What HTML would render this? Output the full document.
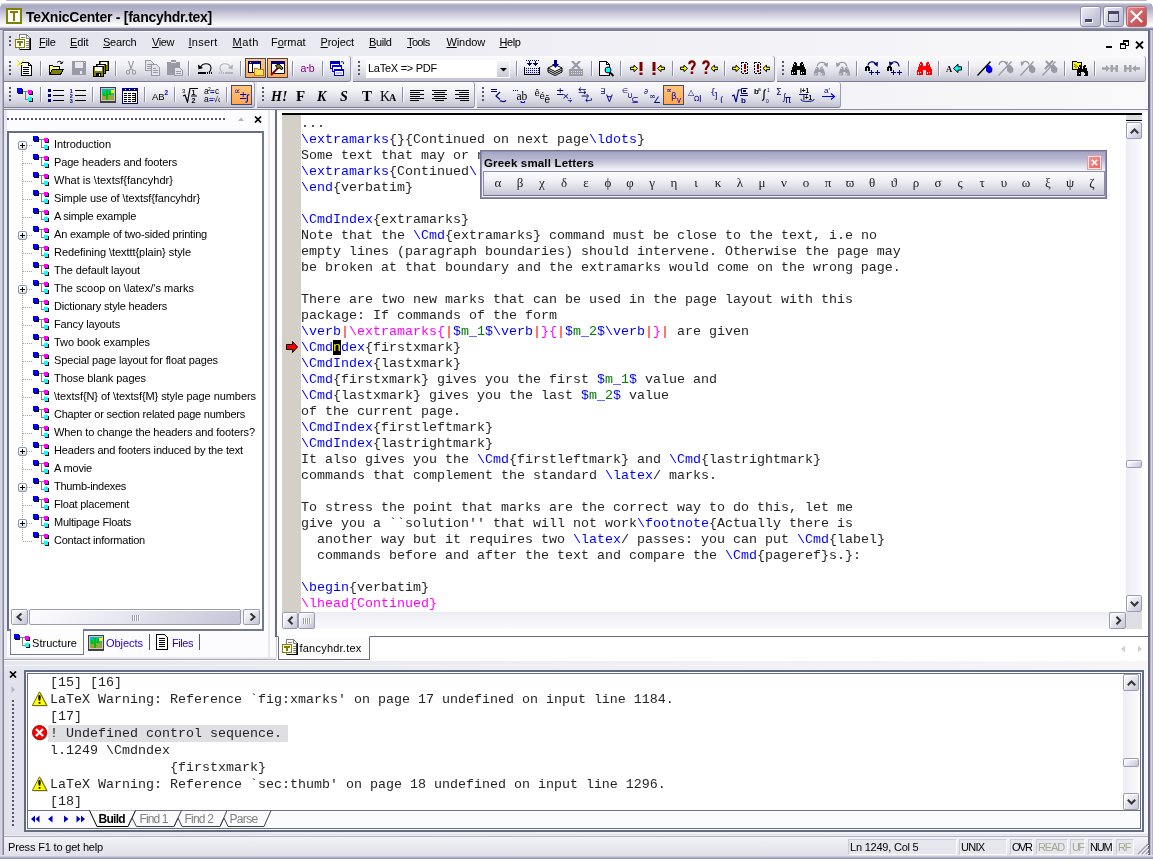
<!DOCTYPE html><html><head><meta charset="utf-8"><title>TeXnicCenter - [fancyhdr.tex]</title><style>
html,body{margin:0;padding:0;}
body{width:1153px;height:859px;overflow:hidden;position:relative;background:#d4d4e0;font-family:"Liberation Sans",sans-serif;font-size:11px;color:#000;}
div,span.a,svg.a{position:absolute;box-sizing:border-box;}
.ft{white-space:pre;display:inline-block;}
.ui{font-family:"Liberation Sans",sans-serif;font-size:11px;line-height:13px;white-space:pre;}
.mono{font-family:"Liberation Mono",monospace;font-size:13.333px;line-height:16px;white-space:pre;letter-spacing:0;color:#242424;}
.b{color:#0000ff}.m{color:#ff00ff}.r{color:#ff0000}.g{color:#008000}
.tb{background:linear-gradient(#fcfcfe 0%,#f1f1f6 35%,#dadae4 72%,#c2c2d0 100%);border-bottom:1px solid #7c7c92;border-right:1px solid #9c9cb0;border-radius:0 3px 3px 0;}
.sep{width:1px;background:#8e8ea8;box-shadow:1px 0 0 #fff;}
.grip{width:2px;background:repeating-linear-gradient(#55556a 0,#55556a 2px,transparent 2px,transparent 4px);}
.on{background:linear-gradient(#ffc67c,#ffa850);border:1px solid #4a4a5c;}
.sbtn{background:linear-gradient(135deg,#fdfdff 0%,#e6e6f0 45%,#c4c4d6 100%);border:1px solid #9a9ab4;border-radius:2px;box-shadow:inset 1px 1px 0 #fff;}
.trk{background:linear-gradient(90deg,#ececf3,#fbfbfd);}
.trkh{background:linear-gradient(#ececf3,#fbfbfd);}
u{text-decoration:underline;}
</style></head><body><div id="w" style="left:0;top:0;width:1153px;height:859px;will-change:transform;">
<div style="left:0px;top:0px;width:1153px;height:859px;background:#c9c9d8;"></div>
<div style="left:0px;top:0px;width:1153px;height:31px;border-radius:7px 7px 0 0;background:linear-gradient(#b4b4c8 0px,#b4b4c8 0.8px,#ffffff 1.2px,#ffffff 2.5px,#bcbcd0 4px,#a9a9c3 6px,#b0b0c8 9px,#cfcfdf 15px,#e6e6ee 20px,#f6f6fa 24px,#ffffff 26px,#d4d4e0 27.5px,#8f8fa8 28.5px,#7c7c96 30px);"></div>
<div style="left:0px;top:0px;width:8px;height:8px;background:radial-gradient(circle at 8px 8px,transparent 7.5px,#fff 8px);"></div>
<div style="left:1145px;top:0px;width:8px;height:8px;background:radial-gradient(circle at 0px 8px,transparent 7.5px,#fff 8px);"></div>
<div style="left:0px;top:30px;width:4px;height:829px;background:linear-gradient(90deg,#b9b9c9 0,#ededf3 1px,#c3c3d3 2px,#9a9ab2 3px,#6e6e8a 4px);"></div>
<div style="left:1148px;top:30px;width:5px;height:829px;background:linear-gradient(90deg,#62627c 0,#6e6e8a 1.5px,#b5b5c8 2.5px,#d5d5e0 3.5px,#a4a4b8 5px);"></div>
<div style="left:0px;top:855px;width:1153px;height:4px;background:linear-gradient(#e9e9f0 0,#c9c9d8 1.5px,#a7a7bd 3px,#7c7c96 4px);"></div>
<div style="left:6px;top:8px;width:16px;height:16px;background:#fff;border:2px solid #808000;"></div>
<div style="left:10px;top:11px;width:8px;height:2px;background:#808000;"></div>
<div style="left:13px;top:11px;width:2px;height:10px;background:#808000;"></div>
<div class="ui" style="left:26px;top:8.5px;font-size:14px;line-height:16px;font-weight:bold;"><span class="ft" style="letter-spacing:-0.257px;">TeXnicCenter - [fancyhdr.tex]</span></div>
<div style="left:1080px;top:6px;width:21px;height:21px;border-radius:3px;border:1px solid #8d8dab;box-shadow:inset 1px 1px 0 #fff;background:linear-gradient(135deg,#f0f0f6,#c9c9dc 60%,#b7b7cf);"><div style="left:4px;top:12px;width:7px;height:3px;background:#474769;box-shadow:1px 1px 0 #fff;"></div></div>
<div style="left:1103px;top:6px;width:21px;height:21px;border-radius:3px;border:1px solid #8d8dab;box-shadow:inset 1px 1px 0 #fff;background:linear-gradient(135deg,#f0f0f6,#c9c9dc 60%,#b7b7cf);"><div style="left:4px;top:4px;width:11px;height:11px;border:1px solid #474769;border-top-width:3px;"></div></div>
<div style="left:1126px;top:6px;width:21px;height:21px;border-radius:3px;border:1px solid #b26a72;box-shadow:inset 1px 1px 0 #f0b0b0;background:linear-gradient(135deg,#e68a8a,#cf5f63 55%,#c0494f);"><svg class="a" style="left:3px;top:3px" width="13" height="13" viewBox="0 0 13 13"><path d="M1.5 1.5L11.5 11.5M11.5 1.5L1.5 11.5" stroke="#fff" stroke-width="2.2" stroke-linecap="round"/></svg></div>
<div style="left:4px;top:31px;width:1144px;height:25px;background:linear-gradient(90deg,#e3e3ed 0,#eeeef4 45%,#f9f9fb 100%);"></div>
<div style="left:4px;top:31px;width:1144px;height:1px;background:#fafafc;"></div>
<div class="grip" style="left:9px;top:36px;width:2px;height:10px;"></div>
<svg class="a" style="left:15px;top:34px" width="16" height="16" viewBox="0 0 16 16" shape-rendering="crispEdges"><path d="M4.5 0.5H11.5L15.5 4.5V15.5H4.5Z" fill="#fff" stroke="#808080" stroke-width="1"/><path d="M11.5 0.5V4.5H15.5" fill="none" stroke="#808080" stroke-width="1"/><rect x="15" y="4" width="1" height="12" fill="#000"/><rect x="5" y="15" width="11" height="1" fill="#000"/><rect x="14" y="5" width="1" height="10" fill="#404040"/><rect x="6" y="3" width="4" height="1" fill="#808080"/><rect x="11" y="7" width="3" height="1" fill="#808080"/><rect x="11" y="9" width="3" height="1" fill="#808080"/><rect x="11" y="11" width="3" height="1" fill="#808080"/><rect x="11" y="13" width="3" height="1" fill="#808080"/><rect x="0" y="5" width="10" height="9" fill="#808000"/><rect x="1" y="6" width="8" height="7" fill="#fff"/><rect x="2" y="7" width="6" height="2" fill="#808000"/><rect x="4" y="7" width="2" height="5" fill="#808000"/></svg>
<div class="ui" style="left:39px;top:36px;"><span class="ft" style="letter-spacing:-0.312px;"><u>F</u>ile</span></div>
<div class="ui" style="left:70px;top:36px;"><span class="ft" style="letter-spacing:-0.117px;"><u>E</u>dit</span></div>
<div class="ui" style="left:103px;top:36px;"><span class="ft" style="letter-spacing:-0.229px;"><u>S</u>earch</span></div>
<div class="ui" style="left:152px;top:36px;"><span class="ft" style="letter-spacing:-0.414px;"><u>V</u>iew</span></div>
<div class="ui" style="left:188.5px;top:36px;"><span class="ft" style="letter-spacing:0.245px;"><u>I</u>nsert</span></div>
<div class="ui" style="left:232.5px;top:36px;"><span class="ft" style="letter-spacing:0.508px;"><u>M</u>ath</span></div>
<div class="ui" style="left:271px;top:36px;"><span class="ft" style="letter-spacing:-0.060px;">F<u>o</u>rmat</span></div>
<div class="ui" style="left:320.5px;top:36px;"><span class="ft" style="letter-spacing:-0.107px;"><u>P</u>roject</span></div>
<div class="ui" style="left:369px;top:36px;"><span class="ft" style="letter-spacing:-0.394px;"><u>B</u>uild</span></div>
<div class="ui" style="left:407px;top:36px;"><span class="ft" style="letter-spacing:-0.637px;"><u>T</u>ools</span></div>
<div class="ui" style="left:446.5px;top:36px;"><span class="ft" style="letter-spacing:-0.107px;"><u>W</u>indow</span></div>
<div class="ui" style="left:499.5px;top:36px;"><span class="ft" style="letter-spacing:-0.410px;"><u>H</u>elp</span></div>
<div style="left:1106px;top:46px;width:6px;height:2px;background:#000;"></div>
<div style="left:1123px;top:40px;width:6px;height:6px;border:1px solid #000;border-top-width:2px;"></div>
<div style="left:1120px;top:43px;width:6px;height:6px;border:1px solid #000;border-top-width:2px;background:#f3f3f7;"></div>
<svg class="a" style="left:1135px;top:41px" width="9" height="8" viewBox="0 0 9 8"><path d="M1 0.5L8 7.5M8 0.5L1 7.5" stroke="#000" stroke-width="1.8"/></svg>
<div style="left:4px;top:56px;width:1144px;height:54px;background:linear-gradient(90deg,#e3e3ed 0,#eeeef4 45%,#f9f9fb 100%);"></div>
<div style="left:4px;top:109px;width:1144px;height:1px;background:#8a8aa2;"></div>
<div class="tb" style="left:4px;top:56px;width:347px;height:26px;"></div>
<div class="grip" style="left:9px;top:61px;width:2px;height:14px;"></div>
<div class="tb" style="left:353px;top:56px;width:422px;height:26px;"></div>
<div class="grip" style="left:358px;top:61px;width:2px;height:14px;"></div>
<div class="tb" style="left:777px;top:56px;width:369px;height:26px;"></div>
<div class="grip" style="left:782px;top:61px;width:2px;height:14px;"></div>
<div class="tb" style="left:4px;top:82px;width:251px;height:26px;"></div>
<div class="grip" style="left:9px;top:87px;width:2px;height:14px;"></div>
<div class="tb" style="left:257px;top:82px;width:218px;height:26px;"></div>
<div class="grip" style="left:262px;top:87px;width:2px;height:14px;"></div>
<div class="tb" style="left:477px;top:82px;width:364px;height:26px;"></div>
<div class="grip" style="left:482px;top:87px;width:2px;height:14px;"></div>
<div class="sep" style="left:40px;top:61px;width:1px;height:15px;"></div>
<div class="sep" style="left:115px;top:61px;width:1px;height:15px;"></div>
<div class="sep" style="left:188px;top:61px;width:1px;height:15px;"></div>
<div class="sep" style="left:240px;top:61px;width:1px;height:15px;"></div>
<div class="sep" style="left:292px;top:61px;width:1px;height:15px;"></div>
<div class="sep" style="left:322px;top:61px;width:1px;height:15px;"></div>
<div class="sep" style="left:516px;top:61px;width:1px;height:15px;"></div>
<div class="sep" style="left:591px;top:61px;width:1px;height:15px;"></div>
<div class="sep" style="left:620px;top:61px;width:1px;height:15px;"></div>
<div class="sep" style="left:672px;top:61px;width:1px;height:15px;"></div>
<div class="sep" style="left:724px;top:61px;width:1px;height:15px;"></div>
<div class="sep" style="left:856px;top:61px;width:1px;height:15px;"></div>
<div class="sep" style="left:908px;top:61px;width:1px;height:15px;"></div>
<div class="sep" style="left:938px;top:61px;width:1px;height:15px;"></div>
<div class="sep" style="left:968px;top:61px;width:1px;height:15px;"></div>
<div class="sep" style="left:1064px;top:61px;width:1px;height:15px;"></div>
<div class="sep" style="left:1094px;top:61px;width:1px;height:15px;"></div>
<div class="sep" style="left:40px;top:87px;width:1px;height:15px;"></div>
<div class="sep" style="left:92px;top:87px;width:1px;height:15px;"></div>
<div class="sep" style="left:144px;top:87px;width:1px;height:15px;"></div>
<div class="sep" style="left:174px;top:87px;width:1px;height:15px;"></div>
<div class="sep" style="left:226px;top:87px;width:1px;height:15px;"></div>
<div class="sep" style="left:402px;top:87px;width:1px;height:15px;"></div>
<div class="on" style="left:245px;top:58px;width:21px;height:20px;"></div>
<div class="on" style="left:267px;top:58px;width:21px;height:20px;"></div>
<div class="on" style="left:231px;top:85px;width:21px;height:20px;"></div>
<div class="on" style="left:663px;top:85px;width:21px;height:20px;"></div>
<svg class="a" style="left:17px;top:60px" width="16" height="16" viewBox="0 0 16 16" shape-rendering="crispEdges"><path d="M4.5 2.5H11.5L14.5 5.5V15.5H4.5Z" fill="#fff" stroke="#000" stroke-width="1"/><path d="M11.5 2.5V5.5H14.5" fill="none" stroke="#000" stroke-width="1"/><rect x="6" y="7" width="6" height="1" fill="#000"/><rect x="6" y="9" width="6" height="1" fill="#000"/><rect x="6" y="11" width="6" height="1" fill="#000"/><rect x="6" y="13" width="6" height="1" fill="#000"/><path d="M0.5 0.5L6 6M6.5 0.5L3 4M0.5 5.5L4 3" fill="none" stroke="#e8e800" stroke-width="1.2"/></svg>
<svg class="a" style="left:48px;top:60px" width="16" height="16" viewBox="0 0 16 16" shape-rendering="crispEdges"><path d="M1.5 14.5V5.5H4.5L5.5 6.5H11.5V9.5" fill="#ffff80" stroke="#000" stroke-width="1"/><path d="M1.5 14.5L4.5 9.5H15.5L12.5 14.5Z" fill="#808000" stroke="#000" stroke-width="1"/><path d="M9 2.5C11 0.5 13.5 1 14 3.5M14 3.5L12 3M14 3.5L15 1.5" fill="none" stroke="#000" stroke-width="1" shape-rendering="auto"/></svg>
<svg class="a" style="left:71px;top:60px" width="16" height="16" viewBox="0 0 16 16" shape-rendering="crispEdges"><rect x="1" y="1" width="14" height="14" fill="#9a9aa6"/><rect x="4" y="2" width="8" height="6" fill="#e9e9f0"/><rect x="4" y="10" width="8" height="5" fill="#9a9aa6"/><rect x="9" y="11" width="2" height="3" fill="#e9e9f0"/><rect x="13" y="2" width="1" height="1" fill="#e9e9f0"/></svg>
<svg class="a" style="left:93px;top:61px" width="16" height="16" viewBox="0 0 16 16" shape-rendering="crispEdges"><rect x="6" y="0" width="10" height="10" fill="#808000"/><path d="M6.5 0.5H15.5V9.5H6.5Z" fill="none" stroke="#000" stroke-width="1"/><rect x="8" y="1" width="6" height="3" fill="#fff"/><rect x="3" y="3" width="10" height="10" fill="#808000"/><path d="M3.5 3.5H12.5V12.5H3.5Z" fill="none" stroke="#000" stroke-width="1"/><rect x="5" y="4" width="6" height="3" fill="#fff"/><rect x="0" y="5" width="11" height="11" fill="#808000"/><path d="M0.5 5.5H10.5V15.5H0.5Z" fill="none" stroke="#000" stroke-width="1"/><rect x="2" y="6" width="7" height="4" fill="#fff"/><rect x="3" y="12" width="5" height="3" fill="#000"/><rect x="6" y="13" width="1" height="2" fill="#fff"/></svg>
<svg class="a" style="left:123px;top:60px" width="16" height="16" viewBox="0 0 16 16"><path d="M5.5 1L8 8.5L6 10.5M10.5 1L8 8.5L10 10.5" fill="none" stroke="#9a9aa6" stroke-width="1.1" shape-rendering="auto"/><ellipse cx="5" cy="12.3" rx="1.6" ry="2" fill="none" stroke="#9a9aa6" stroke-width="1.1"/><ellipse cx="11" cy="12.3" rx="1.6" ry="2" fill="none" stroke="#9a9aa6" stroke-width="1.1"/></svg>
<svg class="a" style="left:145px;top:60px" width="16" height="16" viewBox="0 0 16 16" shape-rendering="crispEdges"><path d="M0.5 0.5H5.5L8.5 3.5V10.5H0.5Z" fill="#e4e4ec" stroke="#9a9aa6" stroke-width="1"/><rect x="2" y="4" width="4" height="1" fill="#9a9aa6"/><rect x="2" y="6" width="4" height="1" fill="#9a9aa6"/><rect x="2" y="8" width="4" height="1" fill="#9a9aa6"/><path d="M6.5 4.5H11.5L14.5 7.5V15.5H6.5Z" fill="#e4e4ec" stroke="#9a9aa6" stroke-width="1"/><rect x="8" y="8" width="3" height="1" fill="#9a9aa6"/><rect x="8" y="10" width="5" height="1" fill="#9a9aa6"/><rect x="8" y="12" width="5" height="1" fill="#9a9aa6"/></svg>
<svg class="a" style="left:167px;top:60px" width="16" height="16" viewBox="0 0 16 16" shape-rendering="crispEdges"><rect x="0" y="2" width="13" height="13" fill="#9a9aa6"/><rect x="4" y="0" width="5" height="3" fill="#9a9aa6"/><rect x="4" y="2" width="5" height="1" fill="#e4e4ec"/><path d="M7.5 7.5H12.5L15.5 10.5V15.5H7.5Z" fill="#e4e4ec" stroke="#9a9aa6" stroke-width="1"/><rect x="9" y="11" width="5" height="1" fill="#9a9aa6"/><rect x="9" y="13" width="5" height="1" fill="#9a9aa6"/></svg>
<svg class="a" style="left:197px;top:60px" width="16" height="16" viewBox="0 0 16 16"><path d="M3.5 7.5C5.5 2.5 13 2.5 14 7.5C14.3 10 13 11.5 12 12.5" fill="none" stroke="#000" stroke-width="1.1" shape-rendering="auto"/><path d="M1 4.5L1.5 9.5L6 8Z" fill="#000" shape-rendering="auto"/><rect x="1" y="12" width="8" height="2" fill="#000"/><rect x="10" y="12" width="1" height="2" fill="#000"/><rect x="12" y="12" width="1" height="2" fill="#000"/><rect x="14" y="12" width="1" height="2" fill="#000"/></svg>
<svg class="a" style="left:218px;top:60px" width="16" height="16" viewBox="0 0 16 16"><path d="M12.5 7.5C10.5 2.5 3 2.5 2 7.5C1.7 10 3 11.5 4 12.5" fill="none" stroke="#b0b0ba" stroke-width="1.1"/><path d="M15 4.5L14.5 9.5L10 8Z" fill="#b0b0ba"/><rect x="7" y="12" width="8" height="2" fill="#b4b4c0"/><rect x="5" y="12" width="1" height="2" fill="#b4b4c0"/><rect x="3" y="12" width="1" height="2" fill="#b4b4c0"/><rect x="1" y="12" width="1" height="2" fill="#b4b4c0"/></svg>
<svg class="a" style="left:248px;top:60px" width="16" height="16" viewBox="0 0 16 16" shape-rendering="crispEdges"><rect x="0" y="1" width="13" height="12" fill="#fff"/><path d="M0.5 1.5H12.5V12.5H0.5Z" fill="none" stroke="#000" stroke-width="1"/><rect x="0" y="1" width="13" height="3" fill="#000080"/><rect x="2" y="2" width="1" height="1" fill="#fff"/><rect x="4" y="4" width="1" height="9" fill="#000"/><path d="M6.5 15.5V8.5H9.5L10.5 9.5H15.5V15.5Z" fill="#ffe060" stroke="#c08000" stroke-width="1"/></svg>
<svg class="a" style="left:270px;top:60px" width="16" height="16" viewBox="0 0 16 16"><rect x="1" y="1" width="14" height="13" fill="#fff"/><path d="M1.5 1.5H14.5V13.5H1.5Z" fill="none" stroke="#000" stroke-width="1"/><rect x="1" y="1" width="14" height="3" fill="#000080"/><path d="M1 15L8 8" fill="none" stroke="#800000" stroke-width="2" shape-rendering="auto"/><path d="M5.5 5.5L9 4L13 8L11.5 10L10 8L7.5 8.5Z" fill="#808000" stroke="#000" stroke-width="1" shape-rendering="auto"/></svg>
<svg class="a" style="left:300px;top:60px" width="16" height="16" viewBox="0 0 16 16"><text x="0.5" y="11.5" font-family="Liberation Sans,sans-serif" font-size="10.5" fill="#800080" font-weight="normal" font-style="normal" text-anchor="start">a</text><rect x="6.8" y="7" width="1.5" height="1.5" fill="#800080"/><text x="8.8" y="11.5" font-family="Liberation Sans,sans-serif" font-size="10.5" fill="#800080" font-weight="normal" font-style="normal" text-anchor="start">b</text></svg>
<svg class="a" style="left:329px;top:60px" width="16" height="16" viewBox="0 0 16 16" shape-rendering="crispEdges"><rect x="1" y="1" width="10" height="8" fill="#fff"/><path d="M1.5 1.5H10.5V8.5H1.5Z" fill="none" stroke="#0000c0" stroke-width="1"/><rect x="1" y="1" width="10" height="3" fill="#0000c0"/><rect x="3" y="5" width="10" height="7" fill="#fff"/><path d="M3.5 5.5H12.5V11.5H3.5Z" fill="none" stroke="#0000ff" stroke-width="1"/><rect x="3" y="5" width="10" height="2" fill="#0000ff"/><rect x="5" y="9" width="10" height="7" fill="#fff"/><path d="M5.5 9.5H14.5V15.5H5.5Z" fill="none" stroke="#0000c0" stroke-width="1"/><rect x="5" y="9" width="10" height="2" fill="#0000c0"/><rect x="7" y="12" width="6" height="2" fill="#c0c0e0"/><path d="M12 2C14 1 15 2 14.5 4" fill="none" stroke="#0000c0" stroke-width="1" shape-rendering="auto"/></svg>
<svg class="a" style="left:524px;top:60px" width="16" height="16" viewBox="0 0 16 16" shape-rendering="crispEdges"><path d="M0.5 6.5V14.5H15.5V6.5" fill="none" stroke="#000" stroke-width="1"/><rect x="0" y="14" width="16" height="1" fill="#000"/><rect x="2" y="8" width="1" height="1" fill="#000080"/><rect x="4" y="8" width="1" height="1" fill="#000080"/><rect x="6" y="8" width="1" height="1" fill="#000080"/><rect x="8" y="8" width="1" height="1" fill="#000080"/><rect x="10" y="8" width="1" height="1" fill="#000080"/><rect x="12" y="8" width="1" height="1" fill="#000080"/><rect x="14" y="8" width="1" height="1" fill="#000080"/><rect x="2" y="10" width="1" height="1" fill="#000080"/><rect x="4" y="10" width="1" height="1" fill="#000080"/><rect x="6" y="10" width="1" height="1" fill="#000080"/><rect x="8" y="10" width="1" height="1" fill="#000080"/><rect x="10" y="10" width="1" height="1" fill="#000080"/><rect x="12" y="10" width="1" height="1" fill="#000080"/><rect x="14" y="10" width="1" height="1" fill="#000080"/><rect x="2" y="12" width="1" height="1" fill="#000080"/><rect x="4" y="12" width="1" height="1" fill="#000080"/><rect x="6" y="12" width="1" height="1" fill="#000080"/><rect x="8" y="12" width="1" height="1" fill="#000080"/><rect x="10" y="12" width="1" height="1" fill="#000080"/><rect x="12" y="12" width="1" height="1" fill="#000080"/><rect x="14" y="12" width="1" height="1" fill="#000080"/><rect x="2" y="0" width="1" height="1" fill="#000080"/><rect x="4" y="0" width="1" height="1" fill="#000080"/><rect x="6" y="0" width="1" height="1" fill="#000080"/><rect x="8" y="0" width="1" height="1" fill="#000080"/><rect x="10" y="0" width="1" height="1" fill="#000080"/><rect x="12" y="0" width="1" height="1" fill="#000080"/><rect x="14" y="0" width="1" height="1" fill="#000080"/><path d="M3 3H8L5.5 6Z M9 3H14L11.5 6Z" fill="#000080"/><rect x="5" y="1" width="1" height="3" fill="#000080"/><rect x="11" y="1" width="1" height="3" fill="#000080"/></svg>
<svg class="a" style="left:547px;top:60px" width="16" height="16" viewBox="0 0 16 16"><path d="M1 8L8 4.5L15 8L8 11.5Z" fill="#fff" stroke="#000" stroke-width="1" shape-rendering="auto"/><path d="M1 8V10L8 13.5L15 10V8M1 10V12L8 15.5L15 12V10" fill="none" stroke="#000" stroke-width="1" shape-rendering="auto"/><rect x="7" y="0" width="3" height="4" fill="#000080"/><path d="M5 4H12L8.5 8Z" fill="#000080" shape-rendering="auto"/></svg>
<svg class="a" style="left:568px;top:61px" width="16" height="16" viewBox="0 0 16 16"><rect x="1" y="8" width="14" height="7" fill="#9a9aa6"/><rect x="3" y="10" width="1" height="1" fill="#e4e4ec"/><rect x="5" y="10" width="1" height="1" fill="#e4e4ec"/><rect x="7" y="10" width="1" height="1" fill="#e4e4ec"/><rect x="9" y="10" width="1" height="1" fill="#e4e4ec"/><rect x="11" y="10" width="1" height="1" fill="#e4e4ec"/><rect x="13" y="10" width="1" height="1" fill="#e4e4ec"/><rect x="3" y="12" width="1" height="1" fill="#e4e4ec"/><rect x="5" y="12" width="1" height="1" fill="#e4e4ec"/><rect x="7" y="12" width="1" height="1" fill="#e4e4ec"/><rect x="9" y="12" width="1" height="1" fill="#e4e4ec"/><rect x="11" y="12" width="1" height="1" fill="#e4e4ec"/><rect x="13" y="12" width="1" height="1" fill="#e4e4ec"/><path d="M4 0L12 8M12 0L4 8" fill="none" stroke="#9a9aa6" stroke-width="2.2" shape-rendering="auto"/></svg>
<svg class="a" style="left:599px;top:61px" width="16" height="16" viewBox="0 0 16 16" shape-rendering="crispEdges"><path d="M0.5 0.5H7.5L10.5 3.5V14.5H0.5Z" fill="#fff" stroke="#000" stroke-width="1"/><path d="M7.5 0.5V3.5H10.5" fill="none" stroke="#000" stroke-width="1"/><circle cx="9" cy="9" r="3" fill="#00ffff" stroke="#000" stroke-width="1" shape-rendering="auto"/><path d="M11 11.5L14.5 15" fill="none" stroke="#000" stroke-width="2" shape-rendering="auto"/></svg>
<svg class="a" style="left:629px;top:60px" width="16" height="16" viewBox="0 0 16 16"><path d="M1.5 7.2h3.5v-2l3.5 3.2l-3.5 3.2v-2h-3.5z" fill="#ffff00" stroke="#000" stroke-width="1" shape-rendering="auto"/><rect x="10.5" y="2" width="3" height="9" fill="#800000"/><rect x="10.5" y="12.5" width="3" height="2.5" fill="#800000"/></svg>
<svg class="a" style="left:651px;top:60px" width="16" height="16" viewBox="0 0 16 16"><rect x="1.5" y="2" width="3" height="9" fill="#800000"/><rect x="1.5" y="12.5" width="3" height="2.5" fill="#800000"/><path d="M13.5 7.2h-3.5v-2l-3.5 3.2l3.5 3.2v-2h3.5z" fill="#ffff00" stroke="#000" stroke-width="1" shape-rendering="auto"/></svg>
<svg class="a" style="left:680px;top:60px" width="16" height="16" viewBox="0 0 16 16"><path d="M0.5 7.2h3.5v-2l3.5 3.2l-3.5 3.2v-2h-3.5z" fill="#ffff00" stroke="#000" stroke-width="1" shape-rendering="auto"/><path d="M9.3 4.2C9.3 0.6 14.7 0.6 14.7 4C14.7 6.5 11.9 6.5 11.9 10" fill="none" stroke="#800000" stroke-width="2.3" shape-rendering="auto"/><rect x="10.7" y="11.5" width="2.5" height="2.5" fill="#800000"/></svg>
<svg class="a" style="left:702px;top:60px" width="16" height="16" viewBox="0 0 16 16"><path d="M1.3 4.2C1.3 0.6 6.7 0.6 6.7 4C6.7 6.5 3.9 6.5 3.9 10" fill="none" stroke="#800000" stroke-width="2.3" shape-rendering="auto"/><rect x="2.7" y="11.5" width="2.5" height="2.5" fill="#800000"/><path d="M16 7.2h-3.5v-2l-3.5 3.2l3.5 3.2v-2h3.5z" fill="#ffff00" stroke="#000" stroke-width="1" shape-rendering="auto"/></svg>
<svg class="a" style="left:732px;top:60px" width="16" height="16" viewBox="0 0 16 16"><path d="M0.5 7.2h3.5v-2l3.5 3.2l-3.5 3.2v-2h-3.5z" fill="#ffff00" stroke="#000" stroke-width="1" shape-rendering="auto"/><rect x="9.5" y="2.5" width="6" height="11" fill="none" stroke="#000" stroke-dasharray="2 1" stroke-width="1" shape-rendering="crispEdges"/><rect x="12" y="4" width="2" height="5" fill="#800000"/><rect x="12" y="10" width="2" height="2" fill="#800000"/></svg>
<svg class="a" style="left:754px;top:60px" width="16" height="16" viewBox="0 0 16 16"><rect x="0.5" y="2.5" width="6" height="11" fill="none" stroke="#000" stroke-dasharray="2 1" stroke-width="1" shape-rendering="crispEdges"/><rect x="3" y="4" width="2" height="5" fill="#800000"/><rect x="3" y="10" width="2" height="2" fill="#800000"/><path d="M16 7.2h-3.5v-2l-3.5 3.2l3.5 3.2v-2h3.5z" fill="#ffff00" stroke="#000" stroke-width="1" shape-rendering="auto"/></svg>
<svg class="a" style="left:791px;top:61px" width="16" height="16" viewBox="0 0 16 16" shape-rendering="crispEdges"><g transform="translate(-1 0) scale(1.07 1)"><path d="M4 1H6V2H7V5H9V2H10V1H12V2L13 4L15 10V14H9.5V9H6.5V14H1V10L3 4L4 2Z" fill="#000"/><rect x="2" y="11" width="1" height="2" fill="#fff"/><rect x="4" y="11" width="1" height="1" fill="#fff"/><rect x="10" y="11" width="1" height="2" fill="#fff"/><rect x="12" y="11" width="1" height="1" fill="#fff"/><rect x="4" y="3" width="1" height="1" fill="#fff"/><rect x="11" y="3" width="1" height="1" fill="#fff"/></g></svg>
<svg class="a" style="left:813px;top:61px" width="16" height="16" viewBox="0 0 16 16"><g transform="translate(0 5) scale(0.8 0.68)"><path d="M4 1H6V2H7V5H9V2H10V1H12V2L13 4L15 10V14H9.5V9H6.5V14H1V10L3 4L4 2Z" fill="#9a9aa6"/><rect x="2" y="11" width="1" height="2" fill="#fff"/><rect x="4" y="11" width="1" height="1" fill="#fff"/><rect x="10" y="11" width="1" height="2" fill="#fff"/><rect x="12" y="11" width="1" height="1" fill="#fff"/><rect x="4" y="3" width="1" height="1" fill="#fff"/><rect x="11" y="3" width="1" height="1" fill="#fff"/></g><path d="M4.5 5C5 0.5 11.5 0 13 4" fill="none" stroke="#9a9aa6" stroke-width="1.3" shape-rendering="auto"/><path d="M10.5 3.5L15 1.5L14.5 6.5Z" fill="#9a9aa6"/></svg>
<svg class="a" style="left:835px;top:61px" width="16" height="16" viewBox="0 0 16 16"><g transform="translate(3 5) scale(0.8 0.68)"><path d="M4 1H6V2H7V5H9V2H10V1H12V2L13 4L15 10V14H9.5V9H6.5V14H1V10L3 4L4 2Z" fill="#9a9aa6"/><rect x="2" y="11" width="1" height="2" fill="#fff"/><rect x="4" y="11" width="1" height="1" fill="#fff"/><rect x="10" y="11" width="1" height="2" fill="#fff"/><rect x="12" y="11" width="1" height="1" fill="#fff"/><rect x="4" y="3" width="1" height="1" fill="#fff"/><rect x="11" y="3" width="1" height="1" fill="#fff"/></g><path d="M11.5 5C11 0.5 4.5 0 3 4" fill="none" stroke="#9a9aa6" stroke-width="1.3" shape-rendering="auto"/><path d="M5.5 3.5L1 1.5L1.5 6.5Z" fill="#9a9aa6"/></svg>
<svg class="a" style="left:864px;top:60px" width="16" height="16" viewBox="0 0 16 16"><rect x="1" y="7" width="2" height="4" fill="#000"/><rect x="4" y="7" width="2" height="4" fill="#000"/><rect x="2" y="6" width="3" height="2" fill="#000"/><rect x="5" y="12" width="5" height="1" fill="#000080"/><rect x="7" y="10" width="1" height="5" fill="#000080"/><rect x="11" y="12" width="5" height="1" fill="#000080"/><rect x="13" y="10" width="1" height="5" fill="#000080"/><path d="M4 5.5C4.5 1 10.5 0.5 12 4.5" fill="none" stroke="#000080" stroke-width="1.2" shape-rendering="auto"/><path d="M9.5 3.5L14 2L13.5 7Z" fill="#000080" shape-rendering="auto"/></svg>
<svg class="a" style="left:886px;top:60px" width="16" height="16" viewBox="0 0 16 16"><rect x="1" y="7" width="2" height="4" fill="#000"/><rect x="4" y="7" width="2" height="4" fill="#000"/><rect x="2" y="6" width="3" height="2" fill="#000"/><rect x="5" y="12" width="5" height="1" fill="#000080"/><rect x="7" y="10" width="1" height="5" fill="#000080"/><rect x="11" y="12" width="5" height="1" fill="#000080"/><rect x="13" y="10" width="1" height="5" fill="#000080"/><path d="M13 6.5C12.5 1 6.5 0.5 5 4" fill="none" stroke="#000080" stroke-width="1.2" shape-rendering="auto"/><path d="M7.5 3L3 1.5L3.5 6.5Z" fill="#000080" shape-rendering="auto"/></svg>
<svg class="a" style="left:917px;top:61px" width="16" height="16" viewBox="0 0 16 16" shape-rendering="crispEdges"><g transform="translate(-1 0) scale(1.07 1)"><path d="M4 1H6V2H7V5H9V2H10V1H12V2L13 4L15 10V14H9.5V9H6.5V14H1V10L3 4L4 2Z" fill="#ff0000"/><rect x="2" y="11" width="1" height="2" fill="#fff"/><rect x="4" y="11" width="1" height="1" fill="#fff"/><rect x="10" y="11" width="1" height="2" fill="#fff"/><rect x="12" y="11" width="1" height="1" fill="#fff"/><rect x="4" y="3" width="1" height="1" fill="#fff"/><rect x="11" y="3" width="1" height="1" fill="#fff"/></g></svg>
<svg class="a" style="left:946px;top:60px" width="16" height="16" viewBox="0 0 16 16"><text x="0" y="11.5" font-family="Liberation Serif,sans-serif" font-size="8.5" fill="#000" font-weight="bold" font-style="normal" text-anchor="start">A</text><path d="M15.5 6.8h-3.5v-2.6l-4.5 4.2l4.5 4.2v-2.6h3.5z" fill="#00ffff" stroke="#000" stroke-width="1"/></svg>
<svg class="a" style="left:977px;top:60px" width="16" height="16" viewBox="0 0 16 16"><path d="M0.5 15.5L13.5 1.5" fill="none" stroke="#000" stroke-width="1.3"/><path d="M9 6.5L12 4.5L15.5 8.5L15 12L12 13.5L9 11Z" fill="#0000e0"/></svg>
<svg class="a" style="left:998px;top:60px" width="16" height="16" viewBox="0 0 16 16"><path d="M0.5 15.5L13.5 1.5" fill="none" stroke="#9a9aa6" stroke-width="1.3"/><path d="M9 6.5L12 4.5L15.5 8.5L15 12L12 13.5L9 11Z" fill="#9a9aa6"/><path d="M1 5C1.5 0.5 6.5 0.5 8 3" fill="none" stroke="#9a9aa6" stroke-width="1.3"/><path d="M6 2L10 1.5L9 6Z" fill="#9a9aa6"/></svg>
<svg class="a" style="left:1020px;top:60px" width="16" height="16" viewBox="0 0 16 16"><path d="M0.5 15.5L13.5 1.5" fill="none" stroke="#9a9aa6" stroke-width="1.3"/><path d="M9 6.5L12 4.5L15.5 8.5L15 12L12 13.5L9 11Z" fill="#9a9aa6"/><path d="M9 4.5C8 0.5 3 0.5 2 3.5" fill="none" stroke="#9a9aa6" stroke-width="1.3"/><path d="M4.5 2.5L0.5 1.5L1.5 6.5Z" fill="#9a9aa6"/></svg>
<svg class="a" style="left:1042px;top:60px" width="16" height="16" viewBox="0 0 16 16"><path d="M0.5 15.5L13.5 1.5" fill="none" stroke="#9a9aa6" stroke-width="1.3"/><path d="M9 6.5L12 4.5L15.5 8.5L15 12L12 13.5L9 11Z" fill="#9a9aa6"/><path d="M4 1L11 9M11 0.5L3 9" fill="none" stroke="#9a9aa6" stroke-width="2"/></svg>
<svg class="a" style="left:1072px;top:60px" width="16" height="16" viewBox="0 0 16 16" shape-rendering="crispEdges"><path d="M0.5 1.5H4.5L5.5 2.5H9.5V9.5H0.5Z" fill="#ffff00" stroke="#000" stroke-width="1"/><path d="M2 4L6 7M2 6L4.5 8" fill="none" stroke="#606000" stroke-width="1" shape-rendering="auto"/><g transform="translate(4 4.5) scale(0.8 0.8)"><path d="M4 1H6V2H7V5H9V2H10V1H12V2L13 4L15 10V14H9.5V9H6.5V14H1V10L3 4L4 2Z" fill="#000"/><rect x="2" y="11" width="1" height="2" fill="#fff"/><rect x="4" y="11" width="1" height="1" fill="#fff"/><rect x="10" y="11" width="1" height="2" fill="#fff"/><rect x="12" y="11" width="1" height="1" fill="#fff"/><rect x="4" y="3" width="1" height="1" fill="#fff"/><rect x="11" y="3" width="1" height="1" fill="#fff"/></g></svg>
<svg class="a" style="left:1102px;top:60px" width="16" height="16" viewBox="0 0 16 16"><path d="M0 7.2H4V5L8 8.5L4 12V9.8H0Z" fill="#a2a2ac"/><rect x="8.5" y="5" width="2.5" height="7" fill="#a2a2ac"/><rect x="13.5" y="5" width="2.5" height="7" fill="#a2a2ac"/><rect x="8.5" y="7.5" width="7.5" height="2" fill="#a2a2ac"/></svg>
<svg class="a" style="left:1124px;top:60px" width="16" height="16" viewBox="0 0 16 16"><path d="M16 7.2H12V5L8 8.5L12 12V9.8H16Z" fill="#a2a2ac"/><rect x="5" y="5" width="2.5" height="7" fill="#a2a2ac"/><rect x="0" y="5" width="2.5" height="7" fill="#a2a2ac"/><rect x="0" y="7.5" width="7.5" height="2" fill="#a2a2ac"/></svg>
<svg class="a" style="left:17px;top:87px" width="16" height="16" viewBox="0 0 16 16" shape-rendering="crispEdges"><rect x="1" y="2" width="5" height="5" fill="#000"/><rect x="0" y="1" width="5" height="5" fill="#0000ff"/><rect x="6" y="4" width="5" height="1" fill="#808080"/><rect x="8" y="4" width="1" height="9" fill="#808080"/><rect x="8" y="12" width="3" height="1" fill="#808080"/><rect x="12" y="4" width="4" height="4" fill="#000"/><rect x="11" y="3" width="4" height="4" fill="#ff00ff"/><rect x="12" y="11" width="4" height="4" fill="#000"/><rect x="11" y="10" width="4" height="4" fill="#00ffff"/></svg>
<svg class="a" style="left:48px;top:88px" width="16" height="16" viewBox="0 0 16 16" shape-rendering="crispEdges"><rect x="0" y="1" width="3" height="3" fill="#000080"/><rect x="5" y="2" width="11" height="1" fill="#000"/><rect x="0" y="6" width="3" height="3" fill="#000080"/><rect x="5" y="7" width="11" height="1" fill="#000"/><rect x="0" y="11" width="3" height="3" fill="#000080"/><rect x="5" y="12" width="11" height="1" fill="#000"/></svg>
<svg class="a" style="left:70px;top:88px" width="16" height="16" viewBox="0 0 16 16"><rect x="5" y="2" width="11" height="1" fill="#000"/><rect x="5" y="7" width="11" height="1" fill="#000"/><rect x="5" y="12" width="11" height="1" fill="#000"/><text x="-0.5" y="4.5" font-family="Liberation Sans,sans-serif" font-size="6" fill="#000080" font-weight="bold" font-style="normal" text-anchor="start">1</text><text x="-0.5" y="9.5" font-family="Liberation Sans,sans-serif" font-size="6" fill="#000080" font-weight="bold" font-style="normal" text-anchor="start">2</text><text x="-0.5" y="14.5" font-family="Liberation Sans,sans-serif" font-size="6" fill="#000080" font-weight="bold" font-style="normal" text-anchor="start">3</text></svg>
<svg class="a" style="left:100px;top:87px" width="16" height="16" viewBox="0 0 16 16" shape-rendering="crispEdges"><rect x="0" y="0" width="16" height="15" fill="#c8c8c8"/><path d="M0.5 0.5H15.5V14.5H0.5Z" fill="none" stroke="#404040" stroke-width="1"/><rect x="2" y="2" width="12" height="6" fill="#00c0c0"/><rect x="2" y="8" width="12" height="5" fill="#a0a040"/><rect x="11" y="3" width="3" height="3" fill="#ffff00"/><rect x="6" y="3" width="2" height="10" fill="#00c000"/><rect x="3" y="5" width="2" height="4" fill="#00c000"/><rect x="3" y="8" width="4" height="1" fill="#00c000"/><rect x="9" y="4" width="2" height="4" fill="#00c000"/><rect x="7" y="7" width="3" height="1" fill="#00c000"/><rect x="0" y="15" width="16" height="1" fill="#404040"/></svg>
<svg class="a" style="left:122px;top:88px" width="16" height="16" viewBox="0 0 16 16" shape-rendering="crispEdges"><rect x="0" y="0" width="16" height="16" fill="#fff"/><path d="M0.5 0.5H15.5V15.5H0.5Z" fill="none" stroke="#000080" stroke-width="1"/><rect x="0" y="0" width="16" height="3" fill="#000080"/><rect x="3" y="1" width="1" height="1" fill="#fff"/><rect x="7" y="1" width="1" height="1" fill="#fff"/><rect x="12" y="1" width="1" height="1" fill="#fff"/><rect x="2" y="5" width="3" height="1" fill="#000"/><rect x="6" y="5" width="3" height="1" fill="#000"/><rect x="10" y="5" width="3" height="1" fill="#000"/><rect x="2" y="7" width="3" height="1" fill="#000"/><rect x="6" y="7" width="3" height="1" fill="#000"/><rect x="10" y="7" width="3" height="1" fill="#000"/><rect x="2" y="9" width="3" height="1" fill="#000"/><rect x="6" y="9" width="3" height="1" fill="#000"/><rect x="10" y="9" width="3" height="1" fill="#000"/><rect x="2" y="11" width="3" height="1" fill="#000"/><rect x="6" y="11" width="3" height="1" fill="#000"/><rect x="10" y="11" width="3" height="1" fill="#000"/><rect x="2" y="13" width="3" height="1" fill="#000"/><rect x="6" y="13" width="3" height="1" fill="#000"/><rect x="10" y="13" width="3" height="1" fill="#000"/><rect x="13" y="5" width="1" height="9" fill="#000"/></svg>
<svg class="a" style="left:152px;top:87px" width="16" height="16" viewBox="0 0 16 16"><text x="0" y="13" font-family="Liberation Sans,sans-serif" font-size="9.5" fill="#000" font-weight="normal" font-style="normal" text-anchor="start">AB</text><text x="12.5" y="8" font-family="Liberation Sans,sans-serif" font-size="6.5" fill="#0000c0" font-weight="bold" font-style="normal" text-anchor="start">2</text></svg>
<svg class="a" style="left:182px;top:87px" width="16" height="16" viewBox="0 0 16 16"><path d="M1 9L3 8L5.5 15L8 1.5H16" fill="none" stroke="#000" stroke-width="1.2"/><text x="9.5" y="8" font-family="Liberation Sans,sans-serif" font-size="7" fill="#000" font-weight="bold" font-style="normal" text-anchor="start">1</text><rect x="9" y="8.5" width="6" height="1" fill="#000"/><text x="9.5" y="15.5" font-family="Liberation Sans,sans-serif" font-size="7" fill="#000" font-weight="bold" font-style="normal" text-anchor="start">2</text><text x="0" y="6" font-family="Liberation Sans,sans-serif" font-size="6" fill="#000" font-weight="normal" font-style="normal" text-anchor="start">3</text></svg>
<svg class="a" style="left:204px;top:87px" width="16" height="16" viewBox="0 0 16 16"><text x="0" y="7" font-family="Liberation Sans,sans-serif" font-size="8.5" fill="#000" font-weight="normal" font-style="normal" text-anchor="start">a</text><text x="4" y="4" font-family="Liberation Sans,sans-serif" font-size="5" fill="#000" font-weight="normal" font-style="normal" text-anchor="start">2</text><text x="6" y="7" font-family="Liberation Sans,sans-serif" font-size="8" fill="#0000ff" font-weight="bold" font-style="normal" text-anchor="start">=</text><text x="11" y="7" font-family="Liberation Sans,sans-serif" font-size="8.5" fill="#000" font-weight="normal" font-style="normal" text-anchor="start">c</text><text x="0" y="15" font-family="Liberation Sans,sans-serif" font-size="8.5" fill="#000" font-weight="normal" font-style="normal" text-anchor="start">a</text><text x="5" y="15" font-family="Liberation Sans,sans-serif" font-size="8" fill="#0000ff" font-weight="bold" font-style="normal" text-anchor="start">=</text><text x="9.5" y="15" font-family="Liberation Sans,sans-serif" font-size="8" fill="#000" font-weight="normal" font-style="normal" text-anchor="start">√c</text></svg>
<svg class="a" style="left:234px;top:87px" width="16" height="16" viewBox="0 0 16 16"><text x="0" y="7" font-family="DejaVu Sans,sans-serif" font-size="9" fill="#0000c0" font-weight="normal" font-style="normal" text-anchor="start">∝</text><text x="5" y="12" font-family="DejaVu Sans,sans-serif" font-size="10" fill="#0000c0" font-weight="normal" font-style="normal" text-anchor="start">±</text><path d="M15.5 8.2C13.8 6.8 13 8.5 13.4 11C13.8 14 13 15.8 11.5 14.8" fill="none" stroke="#0000c0" stroke-width="1.1"/></svg>
<svg class="a" style="left:271px;top:87px" width="16" height="16" viewBox="0 0 16 16"><text x="0" y="14" font-family="Liberation Serif,sans-serif" font-size="14" fill="#000" font-weight="bold" font-style="italic" text-anchor="start">H!</text></svg>
<svg class="a" style="left:293px;top:87px" width="16" height="16" viewBox="0 0 16 16"><text x="3" y="14" font-family="Liberation Serif,sans-serif" font-size="15" fill="#000" font-weight="bold" font-style="normal" text-anchor="start">F</text></svg>
<svg class="a" style="left:315px;top:87px" width="16" height="16" viewBox="0 0 16 16"><text x="2" y="14" font-family="Liberation Serif,sans-serif" font-size="14" fill="#000" font-weight="bold" font-style="italic" text-anchor="start">K</text></svg>
<svg class="a" style="left:337px;top:87px" width="16" height="16" viewBox="0 0 16 16"><text x="3" y="14" font-family="Liberation Serif,sans-serif" font-size="14" fill="#000" font-weight="bold" font-style="italic" text-anchor="start">S</text></svg>
<svg class="a" style="left:359px;top:87px" width="16" height="16" viewBox="0 0 16 16"><text x="3" y="14" font-family="Liberation Serif,sans-serif" font-size="15" fill="#000" font-weight="bold" font-style="normal" text-anchor="start">T</text></svg>
<svg class="a" style="left:380px;top:87px" width="16" height="16" viewBox="0 0 16 16"><text x="0" y="14" font-family="Liberation Serif,sans-serif" font-size="14" fill="#000" font-weight="normal" font-style="normal" text-anchor="start">K</text><text x="9" y="14" font-family="Liberation Serif,sans-serif" font-size="10" fill="#000" font-weight="bold" font-style="normal" text-anchor="start">A</text></svg>
<svg class="a" style="left:410px;top:87px" width="16" height="16" viewBox="0 0 16 16" shape-rendering="crispEdges"><rect x="0" y="3" width="14" height="1" fill="#000"/><rect x="0" y="5" width="10" height="1" fill="#000"/><rect x="0" y="7" width="14" height="1" fill="#000"/><rect x="0" y="9" width="10" height="1" fill="#000"/><rect x="0" y="11" width="14" height="1" fill="#000"/><rect x="0" y="13" width="9" height="1" fill="#000"/></svg>
<svg class="a" style="left:432px;top:87px" width="16" height="16" viewBox="0 0 16 16" shape-rendering="crispEdges"><rect x="0" y="3" width="15" height="1" fill="#000"/><rect x="2" y="5" width="11" height="1" fill="#000"/><rect x="0" y="7" width="15" height="1" fill="#000"/><rect x="2" y="9" width="11" height="1" fill="#000"/><rect x="0" y="11" width="15" height="1" fill="#000"/><rect x="3" y="13" width="9" height="1" fill="#000"/></svg>
<svg class="a" style="left:454px;top:87px" width="16" height="16" viewBox="0 0 16 16" shape-rendering="crispEdges"><rect x="1" y="3" width="14" height="1" fill="#000"/><rect x="5" y="5" width="10" height="1" fill="#000"/><rect x="1" y="7" width="14" height="1" fill="#000"/><rect x="5" y="9" width="10" height="1" fill="#000"/><rect x="1" y="11" width="14" height="1" fill="#000"/><rect x="6" y="13" width="9" height="1" fill="#000"/></svg>
<svg class="a" style="left:491px;top:87px" width="16" height="16" viewBox="0 0 16 16"><rect x="0" y="2" width="6" height="1" fill="#000080"/><rect x="0" y="4" width="6" height="1" fill="#000080"/><path d="M9 5L5 9L9 12.5M9 14.5C10.5 12.5 11.5 16.5 15 13.5" fill="none" stroke="#000080" stroke-width="1.2"/></svg>
<svg class="a" style="left:513px;top:87px" width="16" height="16" viewBox="0 0 16 16"><rect x="0" y="3" width="1" height="1" fill="#000080"/><rect x="2" y="3" width="1" height="1" fill="#000080"/><rect x="4" y="3" width="1" height="1" fill="#000080"/><text x="3.5" y="13" font-family="Liberation Serif,sans-serif" font-size="11.5" fill="#000" font-weight="normal" font-style="normal" text-anchor="start">ab</text><path d="M8 14V15.5H11.5V14" fill="none" stroke="#0000c0" stroke-width="1"/></svg>
<svg class="a" style="left:535px;top:87px" width="16" height="16" viewBox="0 0 16 16"><text x="-0.5" y="9" font-family="Liberation Sans,sans-serif" font-size="9.5" fill="#000" font-weight="normal" font-style="normal" text-anchor="start">ê</text><text x="4.5" y="12" font-family="Liberation Sans,sans-serif" font-size="9.5" fill="#000" font-weight="normal" font-style="normal" text-anchor="start">é</text><text x="9.5" y="15.5" font-family="Liberation Sans,sans-serif" font-size="10" fill="#000" font-weight="normal" font-style="normal" text-anchor="start">ē</text></svg>
<svg class="a" style="left:556px;top:87px" width="16" height="16" viewBox="0 0 16 16"><text x="0" y="8" font-family="DejaVu Sans,sans-serif" font-size="10" fill="#000080" font-weight="normal" font-style="normal" text-anchor="start">±</text><text x="6" y="12" font-family="DejaVu Sans,sans-serif" font-size="9" fill="#000080" font-weight="normal" font-style="normal" text-anchor="start">×</text><text x="11" y="16" font-family="DejaVu Sans,sans-serif" font-size="8" fill="#000080" font-weight="normal" font-style="normal" text-anchor="start">÷</text></svg>
<svg class="a" style="left:578px;top:87px" width="16" height="16" viewBox="0 0 16 16"><text x="0" y="7" font-family="DejaVu Sans,sans-serif" font-size="10" fill="#000080" font-weight="normal" font-style="normal" text-anchor="start">⇆</text><text x="3" y="12" font-family="DejaVu Sans,sans-serif" font-size="10" fill="#000080" font-weight="normal" font-style="normal" text-anchor="start">⇒</text><text x="7" y="16" font-family="DejaVu Sans,sans-serif" font-size="9" fill="#000080" font-weight="normal" font-style="normal" text-anchor="start">↩</text></svg>
<svg class="a" style="left:600px;top:87px" width="16" height="16" viewBox="0 0 16 16"><text x="0" y="7" font-family="DejaVu Sans,sans-serif" font-size="8" fill="#000080" font-weight="normal" font-style="normal" text-anchor="start">∃</text><text x="6" y="15" font-family="DejaVu Sans,sans-serif" font-size="10" fill="#000080" font-weight="normal" font-style="normal" text-anchor="start">∀</text></svg>
<svg class="a" style="left:622px;top:87px" width="16" height="16" viewBox="0 0 16 16"><text x="0" y="6" font-family="DejaVu Sans,sans-serif" font-size="7" fill="#000080" font-weight="normal" font-style="normal" text-anchor="start">∈</text><text x="5" y="11" font-family="DejaVu Sans,sans-serif" font-size="8" fill="#000080" font-weight="normal" font-style="normal" text-anchor="start">∪</text><text x="9" y="16" font-family="DejaVu Sans,sans-serif" font-size="9" fill="#000080" font-weight="normal" font-style="normal" text-anchor="start">⊆</text></svg>
<svg class="a" style="left:644px;top:87px" width="16" height="16" viewBox="0 0 16 16"><text x="0" y="7" font-family="DejaVu Sans,sans-serif" font-size="8" fill="#000080" font-weight="normal" font-style="normal" text-anchor="start">∂</text><text x="5" y="12" font-family="DejaVu Sans,sans-serif" font-size="8" fill="#000080" font-weight="normal" font-style="normal" text-anchor="start">∞</text><text x="9" y="16" font-family="DejaVu Sans,sans-serif" font-size="9" fill="#000080" font-weight="normal" font-style="normal" text-anchor="start">∠</text></svg>
<svg class="a" style="left:666px;top:87px" width="16" height="16" viewBox="0 0 16 16"><text x="0" y="6" font-family="DejaVu Sans,sans-serif" font-size="8" fill="#0000c0" font-weight="normal" font-style="normal" text-anchor="start">∝</text><text x="5" y="12" font-family="DejaVu Sans,sans-serif" font-size="9" fill="#0000c0" font-weight="normal" font-style="normal" text-anchor="start">β</text><text x="10.5" y="15.5" font-family="DejaVu Sans,sans-serif" font-size="8" fill="#0000c0" font-weight="normal" font-style="normal" text-anchor="start">γ</text></svg>
<svg class="a" style="left:688px;top:87px" width="16" height="16" viewBox="0 0 16 16"><text x="0" y="8" font-family="DejaVu Sans,sans-serif" font-size="8" fill="#000080" font-weight="normal" font-style="normal" text-anchor="start">△</text><text x="6" y="14" font-family="DejaVu Sans,sans-serif" font-size="7" fill="#000080" font-weight="normal" font-style="normal" text-anchor="start">Ω</text><text x="11" y="15" font-family="DejaVu Sans,sans-serif" font-size="9" fill="#000080" font-weight="normal" font-style="normal" text-anchor="start">I</text></svg>
<svg class="a" style="left:710px;top:87px" width="16" height="16" viewBox="0 0 16 16"><text x="0" y="8" font-family="DejaVu Sans,sans-serif" font-size="9" fill="#000080" font-weight="normal" font-style="normal" text-anchor="start">{</text><text x="4" y="12" font-family="DejaVu Sans,sans-serif" font-size="9" fill="#000080" font-weight="normal" font-style="normal" text-anchor="start">]</text><text x="10" y="16" font-family="DejaVu Sans,sans-serif" font-size="9" fill="#000080" font-weight="normal" font-style="normal" text-anchor="start">(</text></svg>
<svg class="a" style="left:732px;top:87px" width="16" height="16" viewBox="0 0 16 16"><path d="M0 9L2 8L4 15L6.5 3H9" fill="none" stroke="#000080" stroke-width="1.2"/><path d="M9.5 1.5H15.5M9.5 1.5V6.5H15.5" fill="none" stroke="#000080" stroke-width="1"/><rect x="11" y="3" width="3" height="2" fill="#000080"/><rect x="8" y="8" width="8" height="1" fill="#000080"/><text x="9" y="16" font-family="Liberation Sans,sans-serif" font-size="8" fill="#000080" font-weight="bold" font-style="normal" text-anchor="start">b</text></svg>
<svg class="a" style="left:754px;top:87px" width="16" height="16" viewBox="0 0 16 16"><text x="0" y="7" font-family="Liberation Sans,sans-serif" font-size="8" fill="#000" font-weight="bold" font-style="normal" text-anchor="start">b</text><text x="4" y="4" font-family="Liberation Sans,sans-serif" font-size="5" fill="#000" font-weight="normal" font-style="normal" text-anchor="start">a</text><path d="M12 3C10 2 10 5 10 8C10 11 10 14 8 13" fill="none" stroke="#000" stroke-width="1.2"/><text x="13" y="5" font-family="Liberation Sans,sans-serif" font-size="5" fill="#000080" font-weight="normal" font-style="normal" text-anchor="start">1</text><text x="12" y="16" font-family="Liberation Sans,sans-serif" font-size="5" fill="#000080" font-weight="normal" font-style="normal" text-anchor="start">0</text></svg>
<svg class="a" style="left:776px;top:87px" width="16" height="16" viewBox="0 0 16 16"><text x="0" y="8" font-family="DejaVu Sans,sans-serif" font-size="9" fill="#000080" font-weight="normal" font-style="normal" text-anchor="start">Σ</text><text x="6" y="13" font-family="DejaVu Sans,sans-serif" font-size="9" fill="#000080" font-weight="normal" font-style="normal" text-anchor="start">∫</text><text x="9" y="16" font-family="DejaVu Sans,sans-serif" font-size="10" fill="#000080" font-weight="normal" font-style="normal" text-anchor="start">π</text></svg>
<svg class="a" style="left:799px;top:87px" width="16" height="16" viewBox="0 0 16 16"><text x="1" y="5.5" font-family="Liberation Sans,sans-serif" font-size="6.5" fill="#000" font-weight="bold" font-style="normal" text-anchor="start">i+1</text><rect x="0" y="7" width="9" height="1" fill="#000080"/><text x="4" y="13" font-family="Liberation Sans,sans-serif" font-size="6.5" fill="#000" font-weight="bold" font-style="normal" text-anchor="start">i+1</text><path d="M2 12C2 15 6 14 8 14.5C10 14 15 15 15 12" fill="none" stroke="#000080" stroke-width="1"/></svg>
<svg class="a" style="left:821px;top:87px" width="16" height="16" viewBox="0 0 16 16"><text x="3" y="6" font-family="Liberation Sans,sans-serif" font-size="8" fill="#000080" font-weight="normal" font-style="normal" text-anchor="start">a'</text><path d="M1 9.5H13M10 6.5L13.5 9.5L10 12.5" fill="none" stroke="#0000c0" stroke-width="1.2"/></svg>
<div style="left:366px;top:60px;width:144px;height:18px;background:#fff;"></div>
<div class="ui" style="left:368px;top:62px;"><span class="ft" style="letter-spacing:-0.263px;">LaTeX =&gt; PDF</span></div>
<div style="left:497px;top:61px;width:12px;height:16px;background:linear-gradient(#f4f4f9,#c9c9da);"></div>
<svg class="a" style="left:500px;top:68px" width="7" height="4" viewBox="0 0 7 4"><path d="M0 0H7L3.5 3.5Z" fill="#000"/></svg>
<div style="left:4px;top:656px;width:1144px;height:14px;background:linear-gradient(90deg,#e6e6ef 0,#ececf2 40%,#f6f6f9 100%);"></div>
<div style="left:4px;top:659px;width:272px;height:1px;background:#a9a9b4;"></div>
<div style="left:4px;top:660px;width:272px;height:1px;background:#fdfdfe;"></div>
<div style="left:4px;top:665px;width:1144px;height:1px;background:#f4f4f8;"></div>
<div style="left:4px;top:110px;width:265px;height:547px;background:#fcfcfe;"></div>
<div style="left:4px;top:110px;width:3px;height:547px;background:#e8e8f0;"></div>
<div style="left:268px;top:110px;width:8px;height:547px;background:linear-gradient(90deg,#fcfcfe 0,#d4d4e0 1px,#fdfdfe 2px,#fafafc 8px);"></div>
<div style="left:275px;top:110px;width:2px;height:527px;background:#6a6a82;"></div>
<div style="left:7px;top:118px;width:220px;height:2px;background:repeating-linear-gradient(90deg,#55556a 0,#55556a 2px,transparent 2px,transparent 4px);"></div>
<svg class="a" style="left:238px;top:117px" width="6" height="4" viewBox="0 0 6 4"><path d="M0 4L3 0.5L6 4Z" fill="#b5b5c0"/></svg>
<svg class="a" style="left:254px;top:116px" width="8" height="7" viewBox="0 0 8 7"><path d="M1 0.5L7 6.5M7 0.5L1 6.5" stroke="#000" stroke-width="1.7"/></svg>
<div style="left:7px;top:131px;width:257px;height:500px;background:#fff;border:2px solid #666e84;border-right-color:#737a90;border-bottom-color:#737a90;"></div>
<div style="left:22px;top:149px;width:1px;height:392px;background:repeating-linear-gradient(#a8a498 0,#a8a498 1px,transparent 1px,transparent 2px);"></div>
<div style="left:23px;top:145px;width:10px;height:1px;background:repeating-linear-gradient(90deg,#a8a498 0,#a8a498 1px,transparent 1px,transparent 2px);"></div>
<div style="left:18px;top:141px;width:9px;height:9px;background:linear-gradient(#fff 40%,#d8d2c4);border:1px solid #7e9ab8;border-radius:2px;"><div style="left:1px;top:3px;width:5px;height:1px;background:#000"></div><div style="left:3px;top:1px;width:1px;height:5px;background:#000"></div></div>
<svg class="a" style="left:33px;top:135px" width="16" height="16" viewBox="0 0 16 16" shape-rendering="crispEdges"><rect x="1" y="2" width="5" height="5" fill="#000"/><rect x="0" y="1" width="5" height="5" fill="#0000ff"/><rect x="6" y="4" width="5" height="1" fill="#808080"/><rect x="8" y="4" width="1" height="9" fill="#808080"/><rect x="8" y="12" width="3" height="1" fill="#808080"/><rect x="12" y="4" width="4" height="4" fill="#000"/><rect x="11" y="3" width="4" height="4" fill="#ff00ff"/><rect x="12" y="11" width="4" height="4" fill="#000"/><rect x="11" y="10" width="4" height="4" fill="#00ffff"/></svg>
<div class="ui" style="left:54px;top:137px;line-height:14px;font-size:11px;"><span class="ft" style="letter-spacing:-0.040px;">Introduction</span></div>
<div style="left:23px;top:163px;width:10px;height:1px;background:repeating-linear-gradient(90deg,#a8a498 0,#a8a498 1px,transparent 1px,transparent 2px);"></div>
<svg class="a" style="left:33px;top:153px" width="16" height="16" viewBox="0 0 16 16" shape-rendering="crispEdges"><rect x="1" y="2" width="5" height="5" fill="#000"/><rect x="0" y="1" width="5" height="5" fill="#0000ff"/><rect x="6" y="4" width="5" height="1" fill="#808080"/><rect x="8" y="4" width="1" height="9" fill="#808080"/><rect x="8" y="12" width="3" height="1" fill="#808080"/><rect x="12" y="4" width="4" height="4" fill="#000"/><rect x="11" y="3" width="4" height="4" fill="#ff00ff"/><rect x="12" y="11" width="4" height="4" fill="#000"/><rect x="11" y="10" width="4" height="4" fill="#00ffff"/></svg>
<div class="ui" style="left:54px;top:155px;line-height:14px;font-size:11px;"><span class="ft" style="letter-spacing:-0.150px;">Page headers and footers</span></div>
<div style="left:23px;top:181px;width:10px;height:1px;background:repeating-linear-gradient(90deg,#a8a498 0,#a8a498 1px,transparent 1px,transparent 2px);"></div>
<svg class="a" style="left:33px;top:171px" width="16" height="16" viewBox="0 0 16 16" shape-rendering="crispEdges"><rect x="1" y="2" width="5" height="5" fill="#000"/><rect x="0" y="1" width="5" height="5" fill="#0000ff"/><rect x="6" y="4" width="5" height="1" fill="#808080"/><rect x="8" y="4" width="1" height="9" fill="#808080"/><rect x="8" y="12" width="3" height="1" fill="#808080"/><rect x="12" y="4" width="4" height="4" fill="#000"/><rect x="11" y="3" width="4" height="4" fill="#ff00ff"/><rect x="12" y="11" width="4" height="4" fill="#000"/><rect x="11" y="10" width="4" height="4" fill="#00ffff"/></svg>
<div class="ui" style="left:54px;top:173px;line-height:14px;font-size:11px;"><span class="ft" style="letter-spacing:0.015px;">What is \textsf{fancyhdr}</span></div>
<div style="left:23px;top:199px;width:10px;height:1px;background:repeating-linear-gradient(90deg,#a8a498 0,#a8a498 1px,transparent 1px,transparent 2px);"></div>
<svg class="a" style="left:33px;top:189px" width="16" height="16" viewBox="0 0 16 16" shape-rendering="crispEdges"><rect x="1" y="2" width="5" height="5" fill="#000"/><rect x="0" y="1" width="5" height="5" fill="#0000ff"/><rect x="6" y="4" width="5" height="1" fill="#808080"/><rect x="8" y="4" width="1" height="9" fill="#808080"/><rect x="8" y="12" width="3" height="1" fill="#808080"/><rect x="12" y="4" width="4" height="4" fill="#000"/><rect x="11" y="3" width="4" height="4" fill="#ff00ff"/><rect x="12" y="11" width="4" height="4" fill="#000"/><rect x="11" y="10" width="4" height="4" fill="#00ffff"/></svg>
<div class="ui" style="left:54px;top:191px;line-height:14px;font-size:11px;"><span class="ft" style="letter-spacing:-0.084px;">Simple use of \textsf{fancyhdr}</span></div>
<div style="left:23px;top:217px;width:10px;height:1px;background:repeating-linear-gradient(90deg,#a8a498 0,#a8a498 1px,transparent 1px,transparent 2px);"></div>
<svg class="a" style="left:33px;top:207px" width="16" height="16" viewBox="0 0 16 16" shape-rendering="crispEdges"><rect x="1" y="2" width="5" height="5" fill="#000"/><rect x="0" y="1" width="5" height="5" fill="#0000ff"/><rect x="6" y="4" width="5" height="1" fill="#808080"/><rect x="8" y="4" width="1" height="9" fill="#808080"/><rect x="8" y="12" width="3" height="1" fill="#808080"/><rect x="12" y="4" width="4" height="4" fill="#000"/><rect x="11" y="3" width="4" height="4" fill="#ff00ff"/><rect x="12" y="11" width="4" height="4" fill="#000"/><rect x="11" y="10" width="4" height="4" fill="#00ffff"/></svg>
<div class="ui" style="left:54px;top:209px;line-height:14px;font-size:11px;"><span class="ft" style="letter-spacing:-0.264px;">A simple example</span></div>
<div style="left:23px;top:235px;width:10px;height:1px;background:repeating-linear-gradient(90deg,#a8a498 0,#a8a498 1px,transparent 1px,transparent 2px);"></div>
<div style="left:18px;top:231px;width:9px;height:9px;background:linear-gradient(#fff 40%,#d8d2c4);border:1px solid #7e9ab8;border-radius:2px;"><div style="left:1px;top:3px;width:5px;height:1px;background:#000"></div><div style="left:3px;top:1px;width:1px;height:5px;background:#000"></div></div>
<svg class="a" style="left:33px;top:225px" width="16" height="16" viewBox="0 0 16 16" shape-rendering="crispEdges"><rect x="1" y="2" width="5" height="5" fill="#000"/><rect x="0" y="1" width="5" height="5" fill="#0000ff"/><rect x="6" y="4" width="5" height="1" fill="#808080"/><rect x="8" y="4" width="1" height="9" fill="#808080"/><rect x="8" y="12" width="3" height="1" fill="#808080"/><rect x="12" y="4" width="4" height="4" fill="#000"/><rect x="11" y="3" width="4" height="4" fill="#ff00ff"/><rect x="12" y="11" width="4" height="4" fill="#000"/><rect x="11" y="10" width="4" height="4" fill="#00ffff"/></svg>
<div class="ui" style="left:54px;top:227px;line-height:14px;font-size:11px;"><span class="ft" style="letter-spacing:-0.206px;">An example of two-sided printing</span></div>
<div style="left:23px;top:253px;width:10px;height:1px;background:repeating-linear-gradient(90deg,#a8a498 0,#a8a498 1px,transparent 1px,transparent 2px);"></div>
<svg class="a" style="left:33px;top:243px" width="16" height="16" viewBox="0 0 16 16" shape-rendering="crispEdges"><rect x="1" y="2" width="5" height="5" fill="#000"/><rect x="0" y="1" width="5" height="5" fill="#0000ff"/><rect x="6" y="4" width="5" height="1" fill="#808080"/><rect x="8" y="4" width="1" height="9" fill="#808080"/><rect x="8" y="12" width="3" height="1" fill="#808080"/><rect x="12" y="4" width="4" height="4" fill="#000"/><rect x="11" y="3" width="4" height="4" fill="#ff00ff"/><rect x="12" y="11" width="4" height="4" fill="#000"/><rect x="11" y="10" width="4" height="4" fill="#00ffff"/></svg>
<div class="ui" style="left:54px;top:245px;line-height:14px;font-size:11px;"><span class="ft" style="letter-spacing:-0.058px;">Redefining \texttt{plain} style</span></div>
<div style="left:23px;top:271px;width:10px;height:1px;background:repeating-linear-gradient(90deg,#a8a498 0,#a8a498 1px,transparent 1px,transparent 2px);"></div>
<svg class="a" style="left:33px;top:261px" width="16" height="16" viewBox="0 0 16 16" shape-rendering="crispEdges"><rect x="1" y="2" width="5" height="5" fill="#000"/><rect x="0" y="1" width="5" height="5" fill="#0000ff"/><rect x="6" y="4" width="5" height="1" fill="#808080"/><rect x="8" y="4" width="1" height="9" fill="#808080"/><rect x="8" y="12" width="3" height="1" fill="#808080"/><rect x="12" y="4" width="4" height="4" fill="#000"/><rect x="11" y="3" width="4" height="4" fill="#ff00ff"/><rect x="12" y="11" width="4" height="4" fill="#000"/><rect x="11" y="10" width="4" height="4" fill="#00ffff"/></svg>
<div class="ui" style="left:54px;top:263px;line-height:14px;font-size:11px;"><span class="ft" style="letter-spacing:-0.081px;">The default layout</span></div>
<div style="left:23px;top:289px;width:10px;height:1px;background:repeating-linear-gradient(90deg,#a8a498 0,#a8a498 1px,transparent 1px,transparent 2px);"></div>
<div style="left:18px;top:285px;width:9px;height:9px;background:linear-gradient(#fff 40%,#d8d2c4);border:1px solid #7e9ab8;border-radius:2px;"><div style="left:1px;top:3px;width:5px;height:1px;background:#000"></div><div style="left:3px;top:1px;width:1px;height:5px;background:#000"></div></div>
<svg class="a" style="left:33px;top:279px" width="16" height="16" viewBox="0 0 16 16" shape-rendering="crispEdges"><rect x="1" y="2" width="5" height="5" fill="#000"/><rect x="0" y="1" width="5" height="5" fill="#0000ff"/><rect x="6" y="4" width="5" height="1" fill="#808080"/><rect x="8" y="4" width="1" height="9" fill="#808080"/><rect x="8" y="12" width="3" height="1" fill="#808080"/><rect x="12" y="4" width="4" height="4" fill="#000"/><rect x="11" y="3" width="4" height="4" fill="#ff00ff"/><rect x="12" y="11" width="4" height="4" fill="#000"/><rect x="11" y="10" width="4" height="4" fill="#00ffff"/></svg>
<div class="ui" style="left:54px;top:281px;line-height:14px;font-size:11px;"><span class="ft" style="letter-spacing:0.012px;">The scoop on \latex/'s marks</span></div>
<div style="left:23px;top:307px;width:10px;height:1px;background:repeating-linear-gradient(90deg,#a8a498 0,#a8a498 1px,transparent 1px,transparent 2px);"></div>
<svg class="a" style="left:33px;top:297px" width="16" height="16" viewBox="0 0 16 16" shape-rendering="crispEdges"><rect x="1" y="2" width="5" height="5" fill="#000"/><rect x="0" y="1" width="5" height="5" fill="#0000ff"/><rect x="6" y="4" width="5" height="1" fill="#808080"/><rect x="8" y="4" width="1" height="9" fill="#808080"/><rect x="8" y="12" width="3" height="1" fill="#808080"/><rect x="12" y="4" width="4" height="4" fill="#000"/><rect x="11" y="3" width="4" height="4" fill="#ff00ff"/><rect x="12" y="11" width="4" height="4" fill="#000"/><rect x="11" y="10" width="4" height="4" fill="#00ffff"/></svg>
<div class="ui" style="left:54px;top:299px;line-height:14px;font-size:11px;"><span class="ft" style="letter-spacing:-0.183px;">Dictionary style headers</span></div>
<div style="left:23px;top:325px;width:10px;height:1px;background:repeating-linear-gradient(90deg,#a8a498 0,#a8a498 1px,transparent 1px,transparent 2px);"></div>
<svg class="a" style="left:33px;top:315px" width="16" height="16" viewBox="0 0 16 16" shape-rendering="crispEdges"><rect x="1" y="2" width="5" height="5" fill="#000"/><rect x="0" y="1" width="5" height="5" fill="#0000ff"/><rect x="6" y="4" width="5" height="1" fill="#808080"/><rect x="8" y="4" width="1" height="9" fill="#808080"/><rect x="8" y="12" width="3" height="1" fill="#808080"/><rect x="12" y="4" width="4" height="4" fill="#000"/><rect x="11" y="3" width="4" height="4" fill="#ff00ff"/><rect x="12" y="11" width="4" height="4" fill="#000"/><rect x="11" y="10" width="4" height="4" fill="#00ffff"/></svg>
<div class="ui" style="left:54px;top:317px;line-height:14px;font-size:11px;"><span class="ft" style="letter-spacing:-0.144px;">Fancy layouts</span></div>
<div style="left:23px;top:343px;width:10px;height:1px;background:repeating-linear-gradient(90deg,#a8a498 0,#a8a498 1px,transparent 1px,transparent 2px);"></div>
<svg class="a" style="left:33px;top:333px" width="16" height="16" viewBox="0 0 16 16" shape-rendering="crispEdges"><rect x="1" y="2" width="5" height="5" fill="#000"/><rect x="0" y="1" width="5" height="5" fill="#0000ff"/><rect x="6" y="4" width="5" height="1" fill="#808080"/><rect x="8" y="4" width="1" height="9" fill="#808080"/><rect x="8" y="12" width="3" height="1" fill="#808080"/><rect x="12" y="4" width="4" height="4" fill="#000"/><rect x="11" y="3" width="4" height="4" fill="#ff00ff"/><rect x="12" y="11" width="4" height="4" fill="#000"/><rect x="11" y="10" width="4" height="4" fill="#00ffff"/></svg>
<div class="ui" style="left:54px;top:335px;line-height:14px;font-size:11px;"><span class="ft" style="letter-spacing:-0.072px;">Two book examples</span></div>
<div style="left:23px;top:361px;width:10px;height:1px;background:repeating-linear-gradient(90deg,#a8a498 0,#a8a498 1px,transparent 1px,transparent 2px);"></div>
<svg class="a" style="left:33px;top:351px" width="16" height="16" viewBox="0 0 16 16" shape-rendering="crispEdges"><rect x="1" y="2" width="5" height="5" fill="#000"/><rect x="0" y="1" width="5" height="5" fill="#0000ff"/><rect x="6" y="4" width="5" height="1" fill="#808080"/><rect x="8" y="4" width="1" height="9" fill="#808080"/><rect x="8" y="12" width="3" height="1" fill="#808080"/><rect x="12" y="4" width="4" height="4" fill="#000"/><rect x="11" y="3" width="4" height="4" fill="#ff00ff"/><rect x="12" y="11" width="4" height="4" fill="#000"/><rect x="11" y="10" width="4" height="4" fill="#00ffff"/></svg>
<div class="ui" style="left:54px;top:353px;line-height:14px;font-size:11px;"><span class="ft" style="letter-spacing:-0.137px;">Special page layout for float pages</span></div>
<div style="left:23px;top:379px;width:10px;height:1px;background:repeating-linear-gradient(90deg,#a8a498 0,#a8a498 1px,transparent 1px,transparent 2px);"></div>
<svg class="a" style="left:33px;top:369px" width="16" height="16" viewBox="0 0 16 16" shape-rendering="crispEdges"><rect x="1" y="2" width="5" height="5" fill="#000"/><rect x="0" y="1" width="5" height="5" fill="#0000ff"/><rect x="6" y="4" width="5" height="1" fill="#808080"/><rect x="8" y="4" width="1" height="9" fill="#808080"/><rect x="8" y="12" width="3" height="1" fill="#808080"/><rect x="12" y="4" width="4" height="4" fill="#000"/><rect x="11" y="3" width="4" height="4" fill="#ff00ff"/><rect x="12" y="11" width="4" height="4" fill="#000"/><rect x="11" y="10" width="4" height="4" fill="#00ffff"/></svg>
<div class="ui" style="left:54px;top:371px;line-height:14px;font-size:11px;"><span class="ft" style="letter-spacing:-0.056px;">Those blank pages</span></div>
<div style="left:23px;top:397px;width:10px;height:1px;background:repeating-linear-gradient(90deg,#a8a498 0,#a8a498 1px,transparent 1px,transparent 2px);"></div>
<svg class="a" style="left:33px;top:387px" width="16" height="16" viewBox="0 0 16 16" shape-rendering="crispEdges"><rect x="1" y="2" width="5" height="5" fill="#000"/><rect x="0" y="1" width="5" height="5" fill="#0000ff"/><rect x="6" y="4" width="5" height="1" fill="#808080"/><rect x="8" y="4" width="1" height="9" fill="#808080"/><rect x="8" y="12" width="3" height="1" fill="#808080"/><rect x="12" y="4" width="4" height="4" fill="#000"/><rect x="11" y="3" width="4" height="4" fill="#ff00ff"/><rect x="12" y="11" width="4" height="4" fill="#000"/><rect x="11" y="10" width="4" height="4" fill="#00ffff"/></svg>
<div class="ui" style="left:54px;top:389px;line-height:14px;font-size:11px;"><span class="ft" style="letter-spacing:-0.066px;">\textsf{N} of \textsf{M} style page numbers</span></div>
<div style="left:23px;top:415px;width:10px;height:1px;background:repeating-linear-gradient(90deg,#a8a498 0,#a8a498 1px,transparent 1px,transparent 2px);"></div>
<svg class="a" style="left:33px;top:405px" width="16" height="16" viewBox="0 0 16 16" shape-rendering="crispEdges"><rect x="1" y="2" width="5" height="5" fill="#000"/><rect x="0" y="1" width="5" height="5" fill="#0000ff"/><rect x="6" y="4" width="5" height="1" fill="#808080"/><rect x="8" y="4" width="1" height="9" fill="#808080"/><rect x="8" y="12" width="3" height="1" fill="#808080"/><rect x="12" y="4" width="4" height="4" fill="#000"/><rect x="11" y="3" width="4" height="4" fill="#ff00ff"/><rect x="12" y="11" width="4" height="4" fill="#000"/><rect x="11" y="10" width="4" height="4" fill="#00ffff"/></svg>
<div class="ui" style="left:54px;top:407px;line-height:14px;font-size:11px;"><span class="ft" style="letter-spacing:-0.230px;">Chapter or section related page numbers</span></div>
<div style="left:23px;top:433px;width:10px;height:1px;background:repeating-linear-gradient(90deg,#a8a498 0,#a8a498 1px,transparent 1px,transparent 2px);"></div>
<svg class="a" style="left:33px;top:423px" width="16" height="16" viewBox="0 0 16 16" shape-rendering="crispEdges"><rect x="1" y="2" width="5" height="5" fill="#000"/><rect x="0" y="1" width="5" height="5" fill="#0000ff"/><rect x="6" y="4" width="5" height="1" fill="#808080"/><rect x="8" y="4" width="1" height="9" fill="#808080"/><rect x="8" y="12" width="3" height="1" fill="#808080"/><rect x="12" y="4" width="4" height="4" fill="#000"/><rect x="11" y="3" width="4" height="4" fill="#ff00ff"/><rect x="12" y="11" width="4" height="4" fill="#000"/><rect x="11" y="10" width="4" height="4" fill="#00ffff"/></svg>
<div class="ui" style="left:54px;top:425px;line-height:14px;font-size:11px;"><span class="ft" style="letter-spacing:-0.115px;">When to change the headers and footers?</span></div>
<div style="left:23px;top:451px;width:10px;height:1px;background:repeating-linear-gradient(90deg,#a8a498 0,#a8a498 1px,transparent 1px,transparent 2px);"></div>
<div style="left:18px;top:447px;width:9px;height:9px;background:linear-gradient(#fff 40%,#d8d2c4);border:1px solid #7e9ab8;border-radius:2px;"><div style="left:1px;top:3px;width:5px;height:1px;background:#000"></div><div style="left:3px;top:1px;width:1px;height:5px;background:#000"></div></div>
<svg class="a" style="left:33px;top:441px" width="16" height="16" viewBox="0 0 16 16" shape-rendering="crispEdges"><rect x="1" y="2" width="5" height="5" fill="#000"/><rect x="0" y="1" width="5" height="5" fill="#0000ff"/><rect x="6" y="4" width="5" height="1" fill="#808080"/><rect x="8" y="4" width="1" height="9" fill="#808080"/><rect x="8" y="12" width="3" height="1" fill="#808080"/><rect x="12" y="4" width="4" height="4" fill="#000"/><rect x="11" y="3" width="4" height="4" fill="#ff00ff"/><rect x="12" y="11" width="4" height="4" fill="#000"/><rect x="11" y="10" width="4" height="4" fill="#00ffff"/></svg>
<div class="ui" style="left:54px;top:443px;line-height:14px;font-size:11px;"><span class="ft" style="letter-spacing:-0.156px;">Headers and footers induced by the text</span></div>
<div style="left:23px;top:469px;width:10px;height:1px;background:repeating-linear-gradient(90deg,#a8a498 0,#a8a498 1px,transparent 1px,transparent 2px);"></div>
<svg class="a" style="left:33px;top:459px" width="16" height="16" viewBox="0 0 16 16" shape-rendering="crispEdges"><rect x="1" y="2" width="5" height="5" fill="#000"/><rect x="0" y="1" width="5" height="5" fill="#0000ff"/><rect x="6" y="4" width="5" height="1" fill="#808080"/><rect x="8" y="4" width="1" height="9" fill="#808080"/><rect x="8" y="12" width="3" height="1" fill="#808080"/><rect x="12" y="4" width="4" height="4" fill="#000"/><rect x="11" y="3" width="4" height="4" fill="#ff00ff"/><rect x="12" y="11" width="4" height="4" fill="#000"/><rect x="11" y="10" width="4" height="4" fill="#00ffff"/></svg>
<div class="ui" style="left:54px;top:461px;line-height:14px;font-size:11px;"><span class="ft" style="letter-spacing:-0.163px;">A movie</span></div>
<div style="left:23px;top:487px;width:10px;height:1px;background:repeating-linear-gradient(90deg,#a8a498 0,#a8a498 1px,transparent 1px,transparent 2px);"></div>
<div style="left:18px;top:483px;width:9px;height:9px;background:linear-gradient(#fff 40%,#d8d2c4);border:1px solid #7e9ab8;border-radius:2px;"><div style="left:1px;top:3px;width:5px;height:1px;background:#000"></div><div style="left:3px;top:1px;width:1px;height:5px;background:#000"></div></div>
<svg class="a" style="left:33px;top:477px" width="16" height="16" viewBox="0 0 16 16" shape-rendering="crispEdges"><rect x="1" y="2" width="5" height="5" fill="#000"/><rect x="0" y="1" width="5" height="5" fill="#0000ff"/><rect x="6" y="4" width="5" height="1" fill="#808080"/><rect x="8" y="4" width="1" height="9" fill="#808080"/><rect x="8" y="12" width="3" height="1" fill="#808080"/><rect x="12" y="4" width="4" height="4" fill="#000"/><rect x="11" y="3" width="4" height="4" fill="#ff00ff"/><rect x="12" y="11" width="4" height="4" fill="#000"/><rect x="11" y="10" width="4" height="4" fill="#00ffff"/></svg>
<div class="ui" style="left:54px;top:479px;line-height:14px;font-size:11px;"><span class="ft" style="letter-spacing:-0.294px;">Thumb-indexes</span></div>
<div style="left:23px;top:505px;width:10px;height:1px;background:repeating-linear-gradient(90deg,#a8a498 0,#a8a498 1px,transparent 1px,transparent 2px);"></div>
<svg class="a" style="left:33px;top:495px" width="16" height="16" viewBox="0 0 16 16" shape-rendering="crispEdges"><rect x="1" y="2" width="5" height="5" fill="#000"/><rect x="0" y="1" width="5" height="5" fill="#0000ff"/><rect x="6" y="4" width="5" height="1" fill="#808080"/><rect x="8" y="4" width="1" height="9" fill="#808080"/><rect x="8" y="12" width="3" height="1" fill="#808080"/><rect x="12" y="4" width="4" height="4" fill="#000"/><rect x="11" y="3" width="4" height="4" fill="#ff00ff"/><rect x="12" y="11" width="4" height="4" fill="#000"/><rect x="11" y="10" width="4" height="4" fill="#00ffff"/></svg>
<div class="ui" style="left:54px;top:497px;line-height:14px;font-size:11px;"><span class="ft" style="letter-spacing:-0.218px;">Float placement</span></div>
<div style="left:23px;top:523px;width:10px;height:1px;background:repeating-linear-gradient(90deg,#a8a498 0,#a8a498 1px,transparent 1px,transparent 2px);"></div>
<div style="left:18px;top:519px;width:9px;height:9px;background:linear-gradient(#fff 40%,#d8d2c4);border:1px solid #7e9ab8;border-radius:2px;"><div style="left:1px;top:3px;width:5px;height:1px;background:#000"></div><div style="left:3px;top:1px;width:1px;height:5px;background:#000"></div></div>
<svg class="a" style="left:33px;top:513px" width="16" height="16" viewBox="0 0 16 16" shape-rendering="crispEdges"><rect x="1" y="2" width="5" height="5" fill="#000"/><rect x="0" y="1" width="5" height="5" fill="#0000ff"/><rect x="6" y="4" width="5" height="1" fill="#808080"/><rect x="8" y="4" width="1" height="9" fill="#808080"/><rect x="8" y="12" width="3" height="1" fill="#808080"/><rect x="12" y="4" width="4" height="4" fill="#000"/><rect x="11" y="3" width="4" height="4" fill="#ff00ff"/><rect x="12" y="11" width="4" height="4" fill="#000"/><rect x="11" y="10" width="4" height="4" fill="#00ffff"/></svg>
<div class="ui" style="left:54px;top:515px;line-height:14px;font-size:11px;"><span class="ft" style="letter-spacing:-0.232px;">Multipage Floats</span></div>
<div style="left:23px;top:541px;width:10px;height:1px;background:repeating-linear-gradient(90deg,#a8a498 0,#a8a498 1px,transparent 1px,transparent 2px);"></div>
<svg class="a" style="left:33px;top:531px" width="16" height="16" viewBox="0 0 16 16" shape-rendering="crispEdges"><rect x="1" y="2" width="5" height="5" fill="#000"/><rect x="0" y="1" width="5" height="5" fill="#0000ff"/><rect x="6" y="4" width="5" height="1" fill="#808080"/><rect x="8" y="4" width="1" height="9" fill="#808080"/><rect x="8" y="12" width="3" height="1" fill="#808080"/><rect x="12" y="4" width="4" height="4" fill="#000"/><rect x="11" y="3" width="4" height="4" fill="#ff00ff"/><rect x="12" y="11" width="4" height="4" fill="#000"/><rect x="11" y="10" width="4" height="4" fill="#00ffff"/></svg>
<div class="ui" style="left:54px;top:533px;line-height:14px;font-size:11px;"><span class="ft" style="letter-spacing:-0.231px;">Contact information</span></div>
<div style="left:9px;top:607px;width:253px;height:22px;background:#fff;"></div>
<div class="trkh" style="left:11px;top:609px;width:249px;height:16px;"></div>
<div class="sbtn" style="left:11px;top:609px;width:17px;height:16px;"><svg class="a" style="left:4px;top:3px" width="7" height="8" viewBox="0 0 7 8"><path d="M5.5 0.5L1.5 4L5.5 7.5" stroke="#333" stroke-width="2" fill="none"/></svg></div>
<div class="sbtn" style="left:243px;top:609px;width:17px;height:16px;"><svg class="a" style="left:5px;top:3px" width="7" height="8" viewBox="0 0 7 8"><path d="M1.5 0.5L5.5 4L1.5 7.5" stroke="#333" stroke-width="2" fill="none"/></svg></div>
<div class="sbtn" style="left:29px;top:609px;width:212px;height:16px;"><div style="left:102px;top:5px;width:8px;height:6px;background:repeating-linear-gradient(90deg,#9a9ab0 0,#9a9ab0 1px,#fff 1px,#fff 2px);"></div></div>
<div style="left:10px;top:629px;width:74px;height:26px;background:#fdfdfe;border:1px solid #737a90;border-top:none;"></div>
<svg class="a" style="left:14px;top:633px" width="16" height="16" viewBox="0 0 16 16" shape-rendering="crispEdges"><rect x="1" y="2" width="5" height="5" fill="#000"/><rect x="0" y="1" width="5" height="5" fill="#0000ff"/><rect x="6" y="4" width="5" height="1" fill="#808080"/><rect x="8" y="4" width="1" height="9" fill="#808080"/><rect x="8" y="12" width="3" height="1" fill="#808080"/><rect x="12" y="4" width="4" height="4" fill="#000"/><rect x="11" y="3" width="4" height="4" fill="#ff00ff"/><rect x="12" y="11" width="4" height="4" fill="#000"/><rect x="11" y="10" width="4" height="4" fill="#00ffff"/></svg>
<div class="ui" style="left:32px;top:637px;"><span class="ft" style="letter-spacing:0.040px;">Structure</span></div>
<svg class="a" style="left:88px;top:635px" width="16" height="16" viewBox="0 0 16 16" shape-rendering="crispEdges"><rect x="0" y="0" width="16" height="15" fill="#c8c8c8"/><path d="M0.5 0.5H15.5V14.5H0.5Z" fill="none" stroke="#404040" stroke-width="1"/><rect x="2" y="2" width="12" height="6" fill="#00c0c0"/><rect x="2" y="8" width="12" height="5" fill="#a0a040"/><rect x="11" y="3" width="3" height="3" fill="#ffff00"/><rect x="6" y="3" width="2" height="10" fill="#00c000"/><rect x="3" y="5" width="2" height="4" fill="#00c000"/><rect x="3" y="8" width="4" height="1" fill="#00c000"/><rect x="9" y="4" width="2" height="4" fill="#00c000"/><rect x="7" y="7" width="3" height="1" fill="#00c000"/><rect x="0" y="15" width="16" height="1" fill="#404040"/></svg>
<div class="ui" style="left:106px;top:637px;color:#2400cc;"><span class="ft" style="letter-spacing:-0.042px;">Objects</span></div>
<div style="left:149px;top:634px;width:1px;height:16px;background:#55556a;"></div>
<svg class="a" style="left:154px;top:634px" width="16" height="16" viewBox="0 0 16 16" shape-rendering="crispEdges"><path d="M2.5 0.5H10.5L13.5 3.5V15.5H2.5Z" fill="#fff" stroke="#000" stroke-width="1"/><rect x="5" y="4" width="6" height="1" fill="#000"/><rect x="5" y="6" width="6" height="1" fill="#000"/><rect x="5" y="8" width="6" height="1" fill="#000"/><rect x="5" y="10" width="6" height="1" fill="#000"/><rect x="5" y="12" width="6" height="1" fill="#000"/></svg>
<div class="ui" style="left:172px;top:637px;color:#2400cc;"><span class="ft" style="letter-spacing:-0.447px;">Files</span></div>
<div style="left:199px;top:634px;width:1px;height:16px;background:#55556a;"></div>
<div style="left:277px;top:110px;width:871px;height:527px;background:#fff;"></div>
<div style="left:277px;top:110px;width:871px;height:2px;background:#f4f4f8;"></div>
<div style="left:282px;top:113px;width:860px;height:2px;background:#000;"></div>
<div style="left:282px;top:115px;width:19px;height:497px;background:#d4d0c8;"></div>
<div class="trk" style="left:1126px;top:115px;width:16px;height:497px;"></div>
<div style="left:1126px;top:115px;width:16px;height:6px;background:#dcdce4;border-bottom:1px solid #000;"></div>
<div class="sbtn" style="left:1126px;top:122px;width:16px;height:17px;"><svg class="a" style="left:3px;top:5px" width="9" height="6" viewBox="0 0 9 6"><path d="M0.8 5.2L4.5 1.5L8.2 5.2" stroke="#333" stroke-width="2" fill="none"/></svg></div>
<div class="sbtn" style="left:1126px;top:595px;width:16px;height:17px;"><svg class="a" style="left:3px;top:5px" width="9" height="6" viewBox="0 0 9 6"><path d="M0.8 0.8L4.5 4.5L8.2 0.8" stroke="#333" stroke-width="2" fill="none"/></svg></div>
<div class="sbtn" style="left:1126px;top:460px;width:16px;height:8px;"></div>
<div class="trkh" style="left:282px;top:612px;width:844px;height:17px;"></div>
<div class="sbtn" style="left:282px;top:612px;width:16px;height:17px;"><svg class="a" style="left:4px;top:3px" width="7" height="9" viewBox="0 0 7 9"><path d="M5.5 0.8L1.8 4.5L5.5 8.2" stroke="#333" stroke-width="2" fill="none"/></svg></div>
<div class="sbtn" style="left:298px;top:612px;width:17px;height:17px;"><div style="left:4px;top:5px;width:8px;height:6px;background:repeating-linear-gradient(90deg,#9a9ab0 0,#9a9ab0 1px,#fff 1px,#fff 2px);"></div></div>
<div class="sbtn" style="left:1109px;top:612px;width:17px;height:17px;"><svg class="a" style="left:5px;top:3px" width="7" height="9" viewBox="0 0 7 9"><path d="M1.5 0.8L5.2 4.5L1.5 8.2" stroke="#333" stroke-width="2" fill="none"/></svg></div>
<div style="left:1126px;top:612px;width:16px;height:17px;background:#dedee3;"></div>
<div class="mono" style="left:301px;top:116px;width:820px;height:496px;overflow:hidden;">...
<span class="b">\extramarks</span>{}{Continued on next page<span class="b">\ldots</span>}
Some text that may or n
<span class="b">\extramarks</span>{Continued<span class="b">\</span>
<span class="b">\end</span>{verbatim}

<span class="b">\CmdIndex</span>{extramarks}
Note that the <span class="b">\Cmd</span>{extramarks} command must be close to the text, i.e no
empty lines (paragraph boundaries) should intervene. Otherwise the page may
be broken at that boundary and the extramarks would come on the wrong page.

There are two new marks that can be used in the page layout with this
package: If commands of the form
<span class="b">\verb</span><span class="r">|</span><span class="m">\extramarks{</span><span class="r">|</span><span class="b">$</span><span class="g">m</span><span class="b">_</span><span class="g">1</span><span class="b">$</span><span class="b">\verb</span><span class="r">|</span><span class="m">}{</span><span class="r">|</span><span class="b">$</span><span class="g">m</span><span class="b">_</span><span class="g">2</span><span class="b">$</span><span class="b">\verb</span><span class="r">|</span><span class="m">}</span><span class="r">|</span> are given
<span class="b">\Cmd</span><span style="background:#000;color:#ffff00">n</span><span class="b">dex</span>{firstxmark}
<span class="b">\CmdIndex</span>{lastxmark}
<span class="b">\Cmd</span>{firstxmark} gives you the first <span class="b">$</span><span class="g">m</span><span class="b">_</span><span class="g">1</span><span class="b">$</span> value and
<span class="b">\Cmd</span>{lastxmark} gives you the last <span class="b">$</span><span class="g">m</span><span class="b">_</span><span class="g">2</span><span class="b">$</span> value
of the current page.
<span class="b">\CmdIndex</span>{firstleftmark}
<span class="b">\CmdIndex</span>{lastrightmark}
It also gives you the <span class="b">\Cmd</span>{firstleftmark} and <span class="b">\Cmd</span>{lastrightmark}
commands that complement the standard <span class="b">\latex</span>/ marks.

To stress the point that marks are the correct way to do this, let me
give you a ``solution'' that will not work<span class="b">\footnote</span>{Actually there is
  another way but it requires two <span class="b">\latex</span>/ passes: you can put <span class="b">\Cmd</span>{label}
  commands before and after the text and compare the <span class="b">\Cmd</span>{pageref}s.}:

<span class="b">\begin</span>{verbatim}
<span class="m">\lhead{Continued}</span></div>
<svg class="a" style="left:285px;top:340px" width="14" height="14" viewBox="0 0 14 14"><path d="M1.5 4.5H7.5V1.5L12.5 7L7.5 12.5V9.5H1.5Z" fill="#ff0000" stroke="#000" stroke-width="1"/></svg>
<div style="left:277px;top:636px;width:871px;height:1px;background:#6a6a82;"></div>
<div style="left:277px;top:637px;width:871px;height:24px;background:#fff;"></div>
<div style="left:278px;top:636px;width:92px;height:24px;background:#fdfdfe;border:1px solid #6a6a82;border-top:1px solid #fff;"></div>
<svg class="a" style="left:282px;top:639px" width="16" height="16" viewBox="0 0 16 16" shape-rendering="crispEdges"><path d="M4.5 0.5H11.5L15.5 4.5V15.5H4.5Z" fill="#fff" stroke="#808080" stroke-width="1"/><path d="M11.5 0.5V4.5H15.5" fill="none" stroke="#808080" stroke-width="1"/><rect x="15" y="4" width="1" height="12" fill="#000"/><rect x="5" y="15" width="11" height="1" fill="#000"/><rect x="14" y="5" width="1" height="10" fill="#404040"/><rect x="6" y="3" width="4" height="1" fill="#808080"/><rect x="11" y="7" width="3" height="1" fill="#808080"/><rect x="11" y="9" width="3" height="1" fill="#808080"/><rect x="11" y="11" width="3" height="1" fill="#808080"/><rect x="11" y="13" width="3" height="1" fill="#808080"/><rect x="0" y="5" width="10" height="9" fill="#808000"/><rect x="1" y="6" width="8" height="7" fill="#fff"/><rect x="2" y="7" width="6" height="2" fill="#808000"/><rect x="4" y="7" width="2" height="5" fill="#808000"/></svg>
<div class="ui" style="left:299.5px;top:642px;"><span class="ft" style="letter-spacing:0.223px;">fancyhdr.tex</span></div>
<svg class="a" style="left:1120px;top:645px" width="24" height="8" viewBox="0 0 24 8"><path d="M5 0.5V7.5L1 4ZM18 0.5V7.5L22 4Z" fill="#d0d0d8"/></svg>
<div style="left:4px;top:670px;width:1144px;height:164px;background:linear-gradient(90deg,#e2e2ec 0,#ededf3 30%,#f6f6f9 100%);"></div>
<svg class="a" style="left:9px;top:671px" width="8" height="7" viewBox="0 0 8 7"><path d="M1 0.5L7 6.5M7 0.5L1 6.5" stroke="#000" stroke-width="1.7"/></svg>
<svg class="a" style="left:11px;top:686px" width="4" height="7" viewBox="0 0 4 7"><path d="M0.5 0L4 3.5L0.5 7Z" fill="#b5b5c0"/></svg>
<div style="left:12px;top:700px;width:2px;height:126px;background:repeating-linear-gradient(#55556a 0,#55556a 2px,transparent 2px,transparent 4px);"></div>
<div style="left:24px;top:670px;width:1120px;height:162px;background:#fff;border:2px solid #636c80;"></div>
<div style="left:27px;top:673px;width:1114px;height:156px;border:1px solid #636c80;"></div>
<div style="left:48px;top:725px;width:240px;height:17px;background:#dfdfe3;"></div>
<div class="mono" style="left:50px;top:674px;line-height:17px;">[15] [16]
LaTeX Warning: Reference `fig:xmarks' on page 17 undefined on input line 1184.
[17]
! Undefined control sequence.
l.1249 \Cmdndex
               {firstxmark}
LaTeX Warning: Reference `sec:thumb' on page 18 undefined on input line 1296.
[18]</div>
<svg class="a" style="left:32px;top:691px" width="16" height="16" viewBox="0 0 16 16"><path d="M8.8 1.6L16 15.3H1.6Z" fill="#909098"/><path d="M7.5 0.8L14.7 14.5H0.3Z" fill="#ffff00" stroke="#707000" stroke-width="1" stroke-linejoin="round"/><path d="M7.5 4C9 4 9 6.5 8.2 9.8H6.8C6 6.5 6 4 7.5 4Z" fill="#000"/><rect x="6.7" y="11" width="1.7" height="1.8" fill="#000"/></svg>
<svg class="a" style="left:32px;top:725px" width="16" height="16" viewBox="0 0 16 16"><circle cx="8.3" cy="8.3" r="7.2" fill="#909098"/><circle cx="7.5" cy="7.5" r="7" fill="#ff0000" stroke="#900000" stroke-width="0.9"/><path d="M4 4L11 11M11 4L4 11" fill="none" stroke="#fff" stroke-width="2.3"/></svg>
<svg class="a" style="left:32px;top:776px" width="16" height="16" viewBox="0 0 16 16"><path d="M8.8 1.6L16 15.3H1.6Z" fill="#909098"/><path d="M7.5 0.8L14.7 14.5H0.3Z" fill="#ffff00" stroke="#707000" stroke-width="1" stroke-linejoin="round"/><path d="M7.5 4C9 4 9 6.5 8.2 9.8H6.8C6 6.5 6 4 7.5 4Z" fill="#000"/><rect x="6.7" y="11" width="1.7" height="1.8" fill="#000"/></svg>
<div class="trk" style="left:1123px;top:674px;width:16px;height:136px;"></div>
<div class="sbtn" style="left:1123px;top:674px;width:16px;height:17px;"><svg class="a" style="left:3px;top:5px" width="9" height="6" viewBox="0 0 9 6"><path d="M0.8 5.2L4.5 1.5L8.2 5.2" stroke="#333" stroke-width="2" fill="none"/></svg></div>
<div class="sbtn" style="left:1123px;top:793px;width:16px;height:17px;"><svg class="a" style="left:3px;top:5px" width="9" height="6" viewBox="0 0 9 6"><path d="M0.8 0.8L4.5 4.5L8.2 0.8" stroke="#333" stroke-width="2" fill="none"/></svg></div>
<div class="sbtn" style="left:1123px;top:758px;width:16px;height:9px;"></div>
<div style="left:28px;top:810px;width:1112px;height:1px;background:#6e7388;"></div>
<div style="left:28px;top:811px;width:1112px;height:17px;background:#fbfbfd;"></div>
<svg class="a" style="left:28px;top:810px" width="260" height="18" viewBox="28 810 260 18"><g fill="#0000c0"><path d="M35 815.5V822.5L31 819ZM39.5 815.5V822.5L35.5 819Z"/><path d="M52.5 815.5V822.5L48 819Z"/><path d="M64 815.5V822.5L68.5 819Z"/><path d="M76.5 815.5V822.5L80.5 819ZM81 815.5V822.5L85 819Z"/></g><path d="M89.5 810.5L97 826.5H128L135.5 810.5" fill="#fff" stroke="#000" stroke-width="1"/><path d="M128 826.5L132 818L136.5 826.5H174L181.5 810.5M174 826.5L178 818L182 826.5H220L227 810.5M220 826.5L224 818L228 826.5H264L271 810.5" fill="none" stroke="#404050" stroke-width="1"/></svg>
<div class="ui" style="left:98.5px;top:812px;font-weight:bold;font-size:12px;line-height:14px;"><span class="ft" style="letter-spacing:-0.700px;">Build</span></div>
<div class="ui" style="left:139.5px;top:812px;color:#808080;font-size:12px;line-height:14px;"><span class="ft" style="letter-spacing:-0.893px;">Find 1</span></div>
<div class="ui" style="left:184.5px;top:812px;color:#808080;font-size:12px;line-height:14px;"><span class="ft" style="letter-spacing:-0.810px;">Find 2</span></div>
<div class="ui" style="left:229.5px;top:812px;color:#808080;font-size:12px;line-height:14px;"><span class="ft" style="letter-spacing:-0.672px;">Parse</span></div>
<div style="left:4px;top:834px;width:1144px;height:22px;background:linear-gradient(#d9d9e4 0,#f4f4f8 2px,#ededf3 8px,#e0e0ea 22px);"></div>
<div style="left:4px;top:836px;width:1144px;height:1px;background:#b0b0c4;"></div>
<div class="ui" style="left:8px;top:841px;"><span class="ft" style="letter-spacing:-0.173px;">Press F1 to get help</span></div>
<div style="left:848px;top:839px;width:109px;height:16px;background:#e6e6ee;border:1px solid #fdfdfe;border-top-color:#c9c9d8;border-left-color:#c9c9d8;"></div>
<div class="ui" style="left:850px;top:841px;color:#000;"><span class="ft" style="letter-spacing:-0.219px;">Ln 1249, Col 5</span></div>
<div style="left:959px;top:839px;width:48px;height:16px;background:#e6e6ee;border:1px solid #fdfdfe;border-top-color:#c9c9d8;border-left-color:#c9c9d8;"></div>
<div class="ui" style="left:961px;top:841px;color:#000;"><span class="ft" style="letter-spacing:-0.695px;">UNIX</span></div>
<div style="left:1010px;top:839px;width:23px;height:16px;background:#e6e6ee;border:1px solid #fdfdfe;border-top-color:#c9c9d8;border-left-color:#c9c9d8;"></div>
<div class="ui" style="left:1012px;top:841px;color:#000;"><span class="ft" style="letter-spacing:-1.448px;">OVR</span></div>
<div style="left:1036px;top:839px;width:32px;height:16px;background:#e6e6ee;border:1px solid #fdfdfe;border-top-color:#c9c9d8;border-left-color:#c9c9d8;"></div>
<div class="ui" style="left:1038px;top:841px;color:#a8a890;"><span class="ft" style="letter-spacing:-1.141px;">READ</span></div>
<div style="left:1070px;top:839px;width:15px;height:16px;background:#e6e6ee;border:1px solid #fdfdfe;border-top-color:#c9c9d8;border-left-color:#c9c9d8;"></div>
<div class="ui" style="left:1072px;top:841px;color:#a8a890;"><span class="ft" style="letter-spacing:-1.586px;">UF</span></div>
<div style="left:1088px;top:839px;width:25px;height:16px;background:#e6e6ee;border:1px solid #fdfdfe;border-top-color:#c9c9d8;border-left-color:#c9c9d8;"></div>
<div class="ui" style="left:1090px;top:841px;color:#000;"><span class="ft" style="letter-spacing:-1.188px;">NUM</span></div>
<div style="left:1116px;top:839px;width:18px;height:16px;background:#e6e6ee;border:1px solid #fdfdfe;border-top-color:#c9c9d8;border-left-color:#c9c9d8;"></div>
<div class="ui" style="left:1118px;top:841px;color:#a8a890;"><span class="ft" style="letter-spacing:-1.086px;">RF</span></div>
<svg class="a" style="left:1137px;top:843px" width="12" height="12" viewBox="0 0 12 12"><path d="M11 1L1 11M11 5L5 11M11 9L9 11" stroke="#a0a0b8" stroke-width="1.4"/><path d="M12 2L2 12M12 6L6 12M12 10L10 12" stroke="#fff" stroke-width="1"/></svg>
<div style="left:480px;top:150px;width:627px;height:49px;background:#ededf3;border:1px solid #74749a;box-shadow:inset 0 0 0 1px #8f8fb0;"></div>
<div style="left:482px;top:152px;width:623px;height:19px;background:linear-gradient(#a6a6c4 0,#b6b6cf 35%,#e4e4ee 80%,#f6f6fa 100%);"></div>
<div class="ui" style="left:484px;top:157px;font-weight:bold;font-size:11.5px;"><span class="ft" style="letter-spacing:0.170px;">Greek small Letters</span></div>
<div style="left:1088px;top:156px;width:13px;height:13px;background:linear-gradient(135deg,#f58f8f,#e86a6c);border:1px solid #fbe4e4;box-shadow:0 0 0 1px #dba0a8;"><svg class="a" style="left:2px;top:2px" width="7" height="7" viewBox="0 0 7 7"><path d="M0.8 0.8L6.2 6.2M6.2 0.8L0.8 6.2" stroke="#fff" stroke-width="1.6"/></svg></div>
<div style="left:483px;top:171px;width:622px;height:25px;background:linear-gradient(#fcfcfe 0%,#f1f1f6 35%,#dadae4 72%,#c4c4d2 100%);border:1px solid #8c8cac;border-bottom-color:#74749a;"></div>
<div style="left:487px;top:174px;width:22px;text-align:center;font-family:'Liberation Serif','DejaVu Serif',serif;font-size:13px;line-height:18px;color:#202020;">α</div>
<div style="left:509px;top:174px;width:22px;text-align:center;font-family:'Liberation Serif','DejaVu Serif',serif;font-size:13px;line-height:18px;color:#202020;">β</div>
<div style="left:531px;top:174px;width:22px;text-align:center;font-family:'Liberation Serif','DejaVu Serif',serif;font-size:13px;line-height:18px;color:#202020;">χ</div>
<div style="left:553px;top:174px;width:22px;text-align:center;font-family:'Liberation Serif','DejaVu Serif',serif;font-size:13px;line-height:18px;color:#202020;">δ</div>
<div style="left:575px;top:174px;width:22px;text-align:center;font-family:'Liberation Serif','DejaVu Serif',serif;font-size:13px;line-height:18px;color:#202020;">ε</div>
<div style="left:597px;top:174px;width:22px;text-align:center;font-family:'Liberation Serif','DejaVu Serif',serif;font-size:13px;line-height:18px;color:#202020;">ϕ</div>
<div style="left:619px;top:174px;width:22px;text-align:center;font-family:'Liberation Serif','DejaVu Serif',serif;font-size:13px;line-height:18px;color:#202020;">φ</div>
<div style="left:641px;top:174px;width:22px;text-align:center;font-family:'Liberation Serif','DejaVu Serif',serif;font-size:13px;line-height:18px;color:#202020;">γ</div>
<div style="left:663px;top:174px;width:22px;text-align:center;font-family:'Liberation Serif','DejaVu Serif',serif;font-size:13px;line-height:18px;color:#202020;">η</div>
<div style="left:685px;top:174px;width:22px;text-align:center;font-family:'Liberation Serif','DejaVu Serif',serif;font-size:13px;line-height:18px;color:#202020;">ι</div>
<div style="left:707px;top:174px;width:22px;text-align:center;font-family:'Liberation Serif','DejaVu Serif',serif;font-size:13px;line-height:18px;color:#202020;">κ</div>
<div style="left:729px;top:174px;width:22px;text-align:center;font-family:'Liberation Serif','DejaVu Serif',serif;font-size:13px;line-height:18px;color:#202020;">λ</div>
<div style="left:751px;top:174px;width:22px;text-align:center;font-family:'Liberation Serif','DejaVu Serif',serif;font-size:13px;line-height:18px;color:#202020;">μ</div>
<div style="left:773px;top:174px;width:22px;text-align:center;font-family:'Liberation Serif','DejaVu Serif',serif;font-size:13px;line-height:18px;color:#202020;">ν</div>
<div style="left:795px;top:174px;width:22px;text-align:center;font-family:'Liberation Serif','DejaVu Serif',serif;font-size:13px;line-height:18px;color:#202020;">ο</div>
<div style="left:817px;top:174px;width:22px;text-align:center;font-family:'Liberation Serif','DejaVu Serif',serif;font-size:13px;line-height:18px;color:#202020;">π</div>
<div style="left:839px;top:174px;width:22px;text-align:center;font-family:'Liberation Serif','DejaVu Serif',serif;font-size:13px;line-height:18px;color:#202020;">ϖ</div>
<div style="left:861px;top:174px;width:22px;text-align:center;font-family:'Liberation Serif','DejaVu Serif',serif;font-size:13px;line-height:18px;color:#202020;">θ</div>
<div style="left:883px;top:174px;width:22px;text-align:center;font-family:'Liberation Serif','DejaVu Serif',serif;font-size:13px;line-height:18px;color:#202020;">ϑ</div>
<div style="left:905px;top:174px;width:22px;text-align:center;font-family:'Liberation Serif','DejaVu Serif',serif;font-size:13px;line-height:18px;color:#202020;">ρ</div>
<div style="left:927px;top:174px;width:22px;text-align:center;font-family:'Liberation Serif','DejaVu Serif',serif;font-size:13px;line-height:18px;color:#202020;">σ</div>
<div style="left:949px;top:174px;width:22px;text-align:center;font-family:'Liberation Serif','DejaVu Serif',serif;font-size:13px;line-height:18px;color:#202020;">ς</div>
<div style="left:971px;top:174px;width:22px;text-align:center;font-family:'Liberation Serif','DejaVu Serif',serif;font-size:13px;line-height:18px;color:#202020;">τ</div>
<div style="left:993px;top:174px;width:22px;text-align:center;font-family:'Liberation Serif','DejaVu Serif',serif;font-size:13px;line-height:18px;color:#202020;">υ</div>
<div style="left:1015px;top:174px;width:22px;text-align:center;font-family:'Liberation Serif','DejaVu Serif',serif;font-size:13px;line-height:18px;color:#202020;">ω</div>
<div style="left:1037px;top:174px;width:22px;text-align:center;font-family:'Liberation Serif','DejaVu Serif',serif;font-size:13px;line-height:18px;color:#202020;">ξ</div>
<div style="left:1059px;top:174px;width:22px;text-align:center;font-family:'Liberation Serif','DejaVu Serif',serif;font-size:13px;line-height:18px;color:#202020;">ψ</div>
<div style="left:1081px;top:174px;width:22px;text-align:center;font-family:'Liberation Serif','DejaVu Serif',serif;font-size:13px;line-height:18px;color:#202020;">ζ</div>
</div></body></html>
